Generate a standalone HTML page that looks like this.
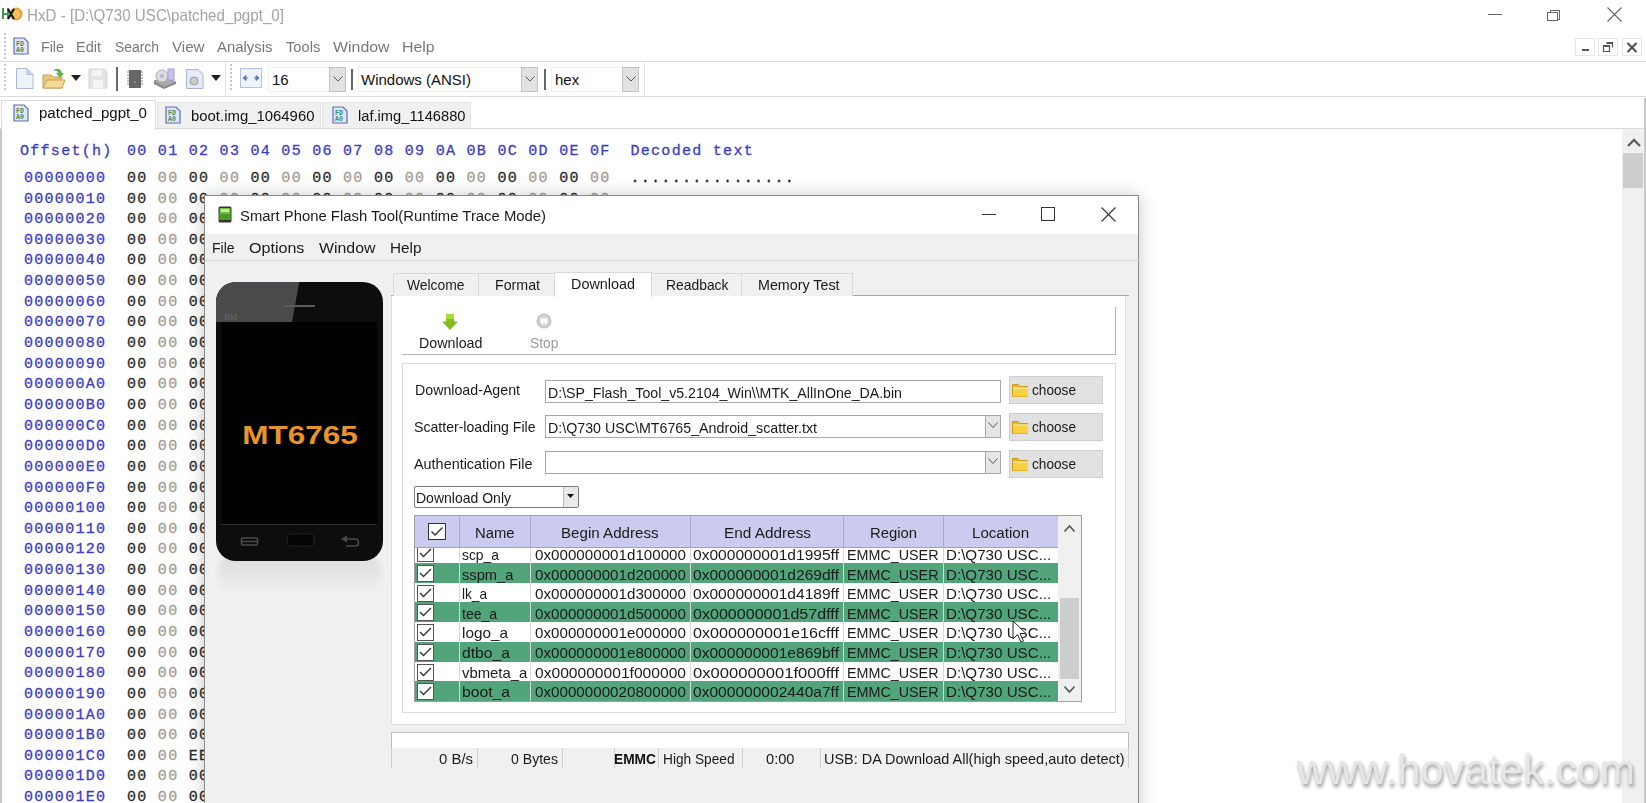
<!DOCTYPE html><html><head><meta charset="utf-8"><style>
html,body{margin:0;padding:0;width:1646px;height:803px;overflow:hidden;background:#fff}
.t{position:absolute;white-space:nowrap;line-height:normal;transform-origin:0 0}
</style></head><body>
<div style="position:absolute;left:0px;top:0px;width:1646px;height:803px;background:#fff"></div>
<svg style="position:absolute;left:1px;top:6px" width="22" height="16" viewBox="0 0 22 16">
<circle cx="15" cy="8" r="6.5" fill="#e0a030"/><circle cx="15" cy="8" r="4.5" fill="#f0c060"/>
<rect x="1" y="2" width="2" height="11" fill="#3a9a5a"/><rect x="6" y="2" width="2" height="11" fill="#3a9a5a"/><rect x="2" y="7" width="5" height="2" fill="#3a9a5a"/>
<path d="M7 3 L13 13 M13 3 L7 13" stroke="#111" stroke-width="2"/></svg>
<div class="t" id="t0" style="transform:scaleX(0.9187);left:27px;top:6.32px;font-size:16.5px;color:#a4a4a4;font-weight:400;font-family:'Liberation Sans',sans-serif;">HxD - [D:\Q730 USC\patched_pgpt_0]</div>
<div style="position:absolute;left:1488px;top:14px;width:14px;height:1px;background:#666"></div>
<div style="position:absolute;left:1550px;top:10px;width:10px;height:10px;border:1px solid #666;box-sizing:border-box"></div>
<div style="position:absolute;left:1547px;top:12px;width:11px;height:9px;border:1px solid #666;background:#fff;box-sizing:border-box"></div>
<svg style="position:absolute;left:1607px;top:7px" width="15" height="15"><path d="M0.5 0.5 L14.5 14.5 M14.5 0.5 L0.5 14.5" stroke="#666" stroke-width="1.1"/></svg>
<div style="position:absolute;left:4px;top:33px;width:2px;height:26px;background:repeating-linear-gradient(#c8c8c8 0 2px,transparent 2px 4px)"></div>
<svg style="position:absolute;left:13px;top:37px" width="16" height="18" viewBox="0 0 16 18">
<path d="M1 1 H11 L15 5 V17 H1 Z" fill="#dfe6f5" stroke="#5a6fb0" stroke-width="1.2"/>
<text x="3" y="8.5" font-family="Liberation Mono" font-size="6.5" font-weight="bold" fill="#3a8a6a">FD</text>
<text x="3" y="15" font-family="Liberation Mono" font-size="6.5" font-weight="bold" fill="#3a8a6a">A0</text></svg>
<div class="t" id="t1" style="transform:scaleX(0.9166);left:40.5px;top:37.74px;font-size:15.5px;color:#78787c;font-weight:400;font-family:'Liberation Sans',sans-serif;">File</div>
<div class="t" id="t2" style="transform:scaleX(0.9357);left:76px;top:37.74px;font-size:15.5px;color:#78787c;font-weight:400;font-family:'Liberation Sans',sans-serif;">Edit</div>
<div class="t" id="t3" style="transform:scaleX(0.8957);left:115px;top:37.74px;font-size:15.5px;color:#78787c;font-weight:400;font-family:'Liberation Sans',sans-serif;">Search</div>
<div class="t" id="t4" style="transform:scaleX(0.9752);left:172px;top:37.74px;font-size:15.5px;color:#78787c;font-weight:400;font-family:'Liberation Sans',sans-serif;">View</div>
<div class="t" id="t5" style="transform:scaleX(0.9616);left:217px;top:37.74px;font-size:15.5px;color:#78787c;font-weight:400;font-family:'Liberation Sans',sans-serif;">Analysis</div>
<div class="t" id="t6" style="transform:scaleX(0.9478);left:285.7px;top:37.74px;font-size:15.5px;color:#78787c;font-weight:400;font-family:'Liberation Sans',sans-serif;">Tools</div>
<div class="t" id="t7" style="transform:scaleX(1.0265);left:333px;top:37.74px;font-size:15.5px;color:#78787c;font-weight:400;font-family:'Liberation Sans',sans-serif;">Window</div>
<div class="t" id="t8" style="transform:scaleX(1.0254);left:402px;top:37.74px;font-size:15.5px;color:#78787c;font-weight:400;font-family:'Liberation Sans',sans-serif;">Help</div>
<div style="position:absolute;left:1575px;top:38px;width:20px;height:18px;border:1px solid #e6e6e6;box-sizing:border-box;background:#fff"></div>
<div style="position:absolute;left:1598px;top:38px;width:20px;height:18px;border:1px solid #e6e6e6;box-sizing:border-box;background:#fff"></div>
<div style="position:absolute;left:1622px;top:38px;width:20px;height:18px;border:1px solid #e6e6e6;box-sizing:border-box;background:#fff"></div>
<div style="position:absolute;left:1582px;top:49px;width:7px;height:2px;background:#555"></div>
<svg style="position:absolute;left:1602px;top:41px" width="12" height="12"><path d="M4.5 1.5 H10.5 V6.5 M1.5 4.5 H7.5 V10.5 H1.5 Z M1.5 5.5 H7.5 M4.5 2.5 H10.5" stroke="#555" fill="none" stroke-width="1.2"/></svg>
<svg style="position:absolute;left:1626px;top:42px" width="12" height="11"><path d="M1.5 1 L10.5 10 M10.5 1 L1.5 10" stroke="#555" stroke-width="2.2"/></svg>
<div style="position:absolute;left:0px;top:61px;width:1646px;height:1px;background:#dcdcdc"></div>
<div style="position:absolute;left:4px;top:64px;width:2px;height:28px;background:repeating-linear-gradient(#c8c8c8 0 2px,transparent 2px 4px)"></div>
<div style="position:absolute;left:230px;top:64px;width:2px;height:28px;background:repeating-linear-gradient(#c8c8c8 0 2px,transparent 2px 4px)"></div>
<div style="position:absolute;left:225px;top:62px;width:1px;height:35px;background:#e4e4e4"></div>
<div style="position:absolute;left:644px;top:62px;width:1px;height:35px;background:#e4e4e4"></div>
<svg style="position:absolute;left:15px;top:67px" width="20" height="24"><path d="M1.5 1.5 H12 L18 7.5 V21.5 H1.5 Z" fill="#eef2fb" stroke="#aab8da"/><path d="M12 1.5 V7.5 H18" fill="#c8d4ee" stroke="#aab8da"/></svg>
<svg style="position:absolute;left:42px;top:67px" width="24" height="24"><path d="M1 8 H9 L11 10 H20 V21 H1 Z" fill="#e8c478" stroke="#c9a050"/><path d="M1 21 L5 13 H23 L20 21 Z" fill="#f4d89a" stroke="#c9a050"/><path d="M10 5 C13 0 19 1 20 6 L22 6 L18 11 L14 6 L16 6 C15 3 12 3 10 5Z" fill="#55b848"/></svg>
<svg style="position:absolute;left:71px;top:75px" width="10" height="6"><path d="M0 0 H10 L5 6 Z" fill="#222"/></svg>
<svg style="position:absolute;left:88px;top:68px" width="20" height="21"><path d="M1 1 H16 L19 4 V20 H1 Z" fill="#e4e4e4" stroke="#d4d4d4"/><rect x="4" y="2" width="10" height="6" fill="#f4f4f4"/><rect x="5" y="12" width="10" height="8" fill="#f6f6f6"/></svg>
<div style="position:absolute;left:116px;top:67px;width:1.5px;height:24px;background:#6a6a6a"></div>
<svg style="position:absolute;left:126px;top:69px" width="18" height="20"><rect x="3" y="1" width="12" height="18" fill="#666"/><circle cx="9" cy="13" r="1" fill="#999"/><path d="M1 3 H3 M1 6 H3 M1 9 H3 M1 12 H3 M1 15 H3 M15 3 H17 M15 6 H17 M15 9 H17 M15 12 H17 M15 15 H17" stroke="#888"/></svg>
<svg style="position:absolute;left:153px;top:68px" width="24" height="22"><path d="M1 13 L11 19 L23 14 L13 9 Z" fill="#aaa" stroke="#999"/><path d="M1 13 V16 L11 21 L23 16 V14 L11 19 Z" fill="#888"/><circle cx="9" cy="8" r="6" fill="#ddd" stroke="#aaa"/><circle cx="9" cy="8" r="2" fill="#b8b0e0"/><rect x="15" y="1" width="6" height="11" fill="#c8c0ee" stroke="#a8a0d8"/></svg>
<svg style="position:absolute;left:185px;top:68px" width="20" height="22"><path d="M1.5 1.5 H13 L18 6 V20.5 H1.5 Z" fill="#e6eaf8" stroke="#a8b4dc"/><circle cx="9" cy="13" r="4" fill="#ccc" stroke="#999"/></svg>
<svg style="position:absolute;left:211px;top:75px" width="10" height="6"><path d="M0 0 H10 L5 6 Z" fill="#222"/></svg>
<svg style="position:absolute;left:240px;top:68px" width="22" height="20"><rect x="0.5" y="0.5" width="21" height="19" fill="#eef2fb" stroke="#b4c2e4"/><path d="M3 10 H8 M14 10 H19 M3 10 L6 7.5 V12.5 Z M19 10 L16 7.5 V12.5 Z" stroke="#5a7ac0" fill="#5a7ac0"/></svg>
<div style="position:absolute;left:268px;top:67px;width:78px;height:25px;background:#fff;border:1px solid #f0f0f0;box-sizing:border-box"></div>
<div style="position:absolute;left:329px;top:67px;width:17px;height:25px;background:#e1e1e1;border:1px solid #c4c4c4;box-sizing:border-box"></div>
<svg style="position:absolute;left:333px;top:76px" width="10" height="6"><path d="M0.5 0.5 L5 5 L9.5 0.5" stroke="#555" fill="none"/></svg>
<div class="t" id="t9" style="left:272px;top:71.20px;font-size:15px;color:#111;font-weight:400;font-family:'Liberation Sans',sans-serif;">16</div>
<div style="position:absolute;left:351px;top:69px;width:2px;height:21px;background:#666"></div>
<div style="position:absolute;left:358px;top:67px;width:180px;height:25px;background:#fff;border:1px solid #f0f0f0;box-sizing:border-box"></div>
<div style="position:absolute;left:521px;top:67px;width:17px;height:25px;background:#e1e1e1;border:1px solid #c4c4c4;box-sizing:border-box"></div>
<svg style="position:absolute;left:525px;top:76px" width="10" height="6"><path d="M0.5 0.5 L5 5 L9.5 0.5" stroke="#555" fill="none"/></svg>
<div class="t" id="t10" style="left:361px;top:71.20px;font-size:15px;color:#111;font-weight:400;font-family:'Liberation Sans',sans-serif;">Windows (ANSI)</div>
<div style="position:absolute;left:544px;top:69px;width:2px;height:21px;background:#666"></div>
<div style="position:absolute;left:551px;top:67px;width:88px;height:25px;background:#fff;border:1px solid #f0f0f0;box-sizing:border-box"></div>
<div style="position:absolute;left:622px;top:67px;width:17px;height:25px;background:#e1e1e1;border:1px solid #c4c4c4;box-sizing:border-box"></div>
<svg style="position:absolute;left:626px;top:76px" width="10" height="6"><path d="M0.5 0.5 L5 5 L9.5 0.5" stroke="#555" fill="none"/></svg>
<div class="t" id="t11" style="left:555px;top:71.20px;font-size:15px;color:#111;font-weight:400;font-family:'Liberation Sans',sans-serif;">hex</div>
<div style="position:absolute;left:0px;top:96px;width:1646px;height:1px;background:#dcdcdc"></div>
<div style="position:absolute;left:157px;top:102px;width:164px;height:26px;background:#f0f0f0;border:1px solid #e4e4e4;border-bottom:none;box-sizing:border-box"></div>
<div style="position:absolute;left:322px;top:102px;width:149px;height:26px;background:#f0f0f0;border:1px solid #e4e4e4;border-bottom:none;box-sizing:border-box"></div>
<div style="position:absolute;left:0px;top:128px;width:1646px;height:1px;background:#dadada"></div>
<div style="position:absolute;left:1px;top:100px;width:155px;height:30px;background:#fff;border:1px solid #dadada;border-bottom:none;box-sizing:border-box"></div>
<svg style="position:absolute;left:13px;top:104px" width="16" height="18" viewBox="0 0 16 18">
<path d="M1 1 H11 L15 5 V17 H1 Z" fill="#dfe6f5" stroke="#5a6fb0" stroke-width="1.2"/>
<text x="3" y="8.5" font-family="Liberation Mono" font-size="6.5" font-weight="bold" fill="#3a8a6a">FD</text>
<text x="3" y="15" font-family="Liberation Mono" font-size="6.5" font-weight="bold" fill="#3a8a6a">A0</text></svg>
<svg style="position:absolute;left:165px;top:106px" width="16" height="18" viewBox="0 0 16 18">
<path d="M1 1 H11 L15 5 V17 H1 Z" fill="#dfe6f5" stroke="#5a6fb0" stroke-width="1.2"/>
<text x="3" y="8.5" font-family="Liberation Mono" font-size="6.5" font-weight="bold" fill="#3a8a6a">FD</text>
<text x="3" y="15" font-family="Liberation Mono" font-size="6.5" font-weight="bold" fill="#3a8a6a">A0</text></svg>
<svg style="position:absolute;left:332px;top:106px" width="16" height="18" viewBox="0 0 16 18">
<path d="M1 1 H11 L15 5 V17 H1 Z" fill="#dfe6f5" stroke="#5a6fb0" stroke-width="1.2"/>
<text x="3" y="8.5" font-family="Liberation Mono" font-size="6.5" font-weight="bold" fill="#3a8a6a">FD</text>
<text x="3" y="15" font-family="Liberation Mono" font-size="6.5" font-weight="bold" fill="#3a8a6a">A0</text></svg>
<div class="t" id="t12" style="transform:scaleX(0.9713);left:38.5px;top:104.24px;font-size:15.5px;color:#111;font-weight:400;font-family:'Liberation Sans',sans-serif;">patched_pgpt_0</div>
<div class="t" id="t13" style="transform:scaleX(0.9617);left:190.5px;top:106.74px;font-size:15.5px;color:#111;font-weight:400;font-family:'Liberation Sans',sans-serif;">boot.img_1064960</div>
<div class="t" id="t14" style="transform:scaleX(0.9474);left:357.5px;top:106.74px;font-size:15.5px;color:#111;font-weight:400;font-family:'Liberation Sans',sans-serif;">laf.img_1146880</div>
<div style="position:absolute;left:0px;top:129px;width:2px;height:674px;background:#c8c8c8"></div>
<div style="position:absolute;left:1622px;top:129px;width:24px;height:674px;background:#f0f0f0"></div>
<div style="position:absolute;left:1644px;top:98px;width:2px;height:705px;background:#c8c8c8"></div>
<svg style="position:absolute;left:1626px;top:138px" width="16" height="10"><path d="M2 8 L8 2 L14 8" stroke="#606060" stroke-width="2.4" fill="none"/></svg>
<div style="position:absolute;left:1623px;top:153px;width:20px;height:35px;background:#cdcdcd"></div>
<div class="t" id="t15" style="left:20px;top:142.90px;font-size:15px;color:#3c3cc8;font-weight:400;font-family:'Liberation Mono',sans-serif;letter-spacing:1.29px;-webkit-text-stroke:0.3px currentColor">Offset(h)</div>
<div class="t" id="t16" style="left:127.0px;top:142.90px;font-size:15px;color:#3c3cc8;font-weight:400;font-family:'Liberation Mono',sans-serif;letter-spacing:1.29px;-webkit-text-stroke:0.3px currentColor">00</div>
<div class="t" id="t17" style="left:157.87px;top:142.90px;font-size:15px;color:#3c3cc8;font-weight:400;font-family:'Liberation Mono',sans-serif;letter-spacing:1.29px;-webkit-text-stroke:0.3px currentColor">01</div>
<div class="t" id="t18" style="left:188.74px;top:142.90px;font-size:15px;color:#3c3cc8;font-weight:400;font-family:'Liberation Mono',sans-serif;letter-spacing:1.29px;-webkit-text-stroke:0.3px currentColor">02</div>
<div class="t" id="t19" style="left:219.61px;top:142.90px;font-size:15px;color:#3c3cc8;font-weight:400;font-family:'Liberation Mono',sans-serif;letter-spacing:1.29px;-webkit-text-stroke:0.3px currentColor">03</div>
<div class="t" id="t20" style="left:250.48000000000002px;top:142.90px;font-size:15px;color:#3c3cc8;font-weight:400;font-family:'Liberation Mono',sans-serif;letter-spacing:1.29px;-webkit-text-stroke:0.3px currentColor">04</div>
<div class="t" id="t21" style="left:281.35px;top:142.90px;font-size:15px;color:#3c3cc8;font-weight:400;font-family:'Liberation Mono',sans-serif;letter-spacing:1.29px;-webkit-text-stroke:0.3px currentColor">05</div>
<div class="t" id="t22" style="left:312.22px;top:142.90px;font-size:15px;color:#3c3cc8;font-weight:400;font-family:'Liberation Mono',sans-serif;letter-spacing:1.29px;-webkit-text-stroke:0.3px currentColor">06</div>
<div class="t" id="t23" style="left:343.09000000000003px;top:142.90px;font-size:15px;color:#3c3cc8;font-weight:400;font-family:'Liberation Mono',sans-serif;letter-spacing:1.29px;-webkit-text-stroke:0.3px currentColor">07</div>
<div class="t" id="t24" style="left:373.96000000000004px;top:142.90px;font-size:15px;color:#3c3cc8;font-weight:400;font-family:'Liberation Mono',sans-serif;letter-spacing:1.29px;-webkit-text-stroke:0.3px currentColor">08</div>
<div class="t" id="t25" style="left:404.83px;top:142.90px;font-size:15px;color:#3c3cc8;font-weight:400;font-family:'Liberation Mono',sans-serif;letter-spacing:1.29px;-webkit-text-stroke:0.3px currentColor">09</div>
<div class="t" id="t26" style="left:435.7px;top:142.90px;font-size:15px;color:#3c3cc8;font-weight:400;font-family:'Liberation Mono',sans-serif;letter-spacing:1.29px;-webkit-text-stroke:0.3px currentColor">0A</div>
<div class="t" id="t27" style="left:466.57px;top:142.90px;font-size:15px;color:#3c3cc8;font-weight:400;font-family:'Liberation Mono',sans-serif;letter-spacing:1.29px;-webkit-text-stroke:0.3px currentColor">0B</div>
<div class="t" id="t28" style="left:497.44px;top:142.90px;font-size:15px;color:#3c3cc8;font-weight:400;font-family:'Liberation Mono',sans-serif;letter-spacing:1.29px;-webkit-text-stroke:0.3px currentColor">0C</div>
<div class="t" id="t29" style="left:528.31px;top:142.90px;font-size:15px;color:#3c3cc8;font-weight:400;font-family:'Liberation Mono',sans-serif;letter-spacing:1.29px;-webkit-text-stroke:0.3px currentColor">0D</div>
<div class="t" id="t30" style="left:559.1800000000001px;top:142.90px;font-size:15px;color:#3c3cc8;font-weight:400;font-family:'Liberation Mono',sans-serif;letter-spacing:1.29px;-webkit-text-stroke:0.3px currentColor">0E</div>
<div class="t" id="t31" style="left:590.05px;top:142.90px;font-size:15px;color:#3c3cc8;font-weight:400;font-family:'Liberation Mono',sans-serif;letter-spacing:1.29px;-webkit-text-stroke:0.3px currentColor">0F</div>
<div class="t" id="t32" style="left:630.5px;top:142.90px;font-size:15px;color:#3c3cc8;font-weight:400;font-family:'Liberation Mono',sans-serif;letter-spacing:1.29px;-webkit-text-stroke:0.3px currentColor">Decoded text</div>
<div class="t" id="t33" style="left:24px;top:169.90px;font-size:15px;color:#3c3cc8;font-weight:400;font-family:'Liberation Mono',sans-serif;letter-spacing:1.29px;-webkit-text-stroke:0.3px currentColor">00000000</div>
<div class="t" id="t34" style="left:127.0px;top:169.90px;font-size:15px;color:#2c2c2c;font-weight:400;font-family:'Liberation Mono',sans-serif;letter-spacing:1.29px;-webkit-text-stroke:0.3px currentColor">00</div>
<div class="t" id="t35" style="left:157.87px;top:169.90px;font-size:15px;color:#a29c94;font-weight:400;font-family:'Liberation Mono',sans-serif;letter-spacing:1.29px;-webkit-text-stroke:0.3px currentColor">00</div>
<div class="t" id="t36" style="left:188.74px;top:169.90px;font-size:15px;color:#2c2c2c;font-weight:400;font-family:'Liberation Mono',sans-serif;letter-spacing:1.29px;-webkit-text-stroke:0.3px currentColor">00</div>
<div class="t" id="t37" style="left:219.61px;top:169.90px;font-size:15px;color:#a29c94;font-weight:400;font-family:'Liberation Mono',sans-serif;letter-spacing:1.29px;-webkit-text-stroke:0.3px currentColor">00</div>
<div class="t" id="t38" style="left:250.48000000000002px;top:169.90px;font-size:15px;color:#2c2c2c;font-weight:400;font-family:'Liberation Mono',sans-serif;letter-spacing:1.29px;-webkit-text-stroke:0.3px currentColor">00</div>
<div class="t" id="t39" style="left:281.35px;top:169.90px;font-size:15px;color:#a29c94;font-weight:400;font-family:'Liberation Mono',sans-serif;letter-spacing:1.29px;-webkit-text-stroke:0.3px currentColor">00</div>
<div class="t" id="t40" style="left:312.22px;top:169.90px;font-size:15px;color:#2c2c2c;font-weight:400;font-family:'Liberation Mono',sans-serif;letter-spacing:1.29px;-webkit-text-stroke:0.3px currentColor">00</div>
<div class="t" id="t41" style="left:343.09000000000003px;top:169.90px;font-size:15px;color:#a29c94;font-weight:400;font-family:'Liberation Mono',sans-serif;letter-spacing:1.29px;-webkit-text-stroke:0.3px currentColor">00</div>
<div class="t" id="t42" style="left:373.96000000000004px;top:169.90px;font-size:15px;color:#2c2c2c;font-weight:400;font-family:'Liberation Mono',sans-serif;letter-spacing:1.29px;-webkit-text-stroke:0.3px currentColor">00</div>
<div class="t" id="t43" style="left:404.83px;top:169.90px;font-size:15px;color:#a29c94;font-weight:400;font-family:'Liberation Mono',sans-serif;letter-spacing:1.29px;-webkit-text-stroke:0.3px currentColor">00</div>
<div class="t" id="t44" style="left:435.7px;top:169.90px;font-size:15px;color:#2c2c2c;font-weight:400;font-family:'Liberation Mono',sans-serif;letter-spacing:1.29px;-webkit-text-stroke:0.3px currentColor">00</div>
<div class="t" id="t45" style="left:466.57px;top:169.90px;font-size:15px;color:#a29c94;font-weight:400;font-family:'Liberation Mono',sans-serif;letter-spacing:1.29px;-webkit-text-stroke:0.3px currentColor">00</div>
<div class="t" id="t46" style="left:497.44px;top:169.90px;font-size:15px;color:#2c2c2c;font-weight:400;font-family:'Liberation Mono',sans-serif;letter-spacing:1.29px;-webkit-text-stroke:0.3px currentColor">00</div>
<div class="t" id="t47" style="left:528.31px;top:169.90px;font-size:15px;color:#a29c94;font-weight:400;font-family:'Liberation Mono',sans-serif;letter-spacing:1.29px;-webkit-text-stroke:0.3px currentColor">00</div>
<div class="t" id="t48" style="left:559.1800000000001px;top:169.90px;font-size:15px;color:#2c2c2c;font-weight:400;font-family:'Liberation Mono',sans-serif;letter-spacing:1.29px;-webkit-text-stroke:0.3px currentColor">00</div>
<div class="t" id="t49" style="left:590.05px;top:169.90px;font-size:15px;color:#a29c94;font-weight:400;font-family:'Liberation Mono',sans-serif;letter-spacing:1.29px;-webkit-text-stroke:0.3px currentColor">00</div>
<div class="t" id="t50" style="left:630.5px;top:169.90px;font-size:15px;color:#222;font-weight:400;font-family:'Liberation Mono',sans-serif;letter-spacing:1.29px;-webkit-text-stroke:0.3px currentColor">................</div>
<div class="t" id="t51" style="left:24px;top:190.54px;font-size:15px;color:#3c3cc8;font-weight:400;font-family:'Liberation Mono',sans-serif;letter-spacing:1.29px;-webkit-text-stroke:0.3px currentColor">00000010</div>
<div class="t" id="t52" style="left:127.0px;top:190.54px;font-size:15px;color:#2c2c2c;font-weight:400;font-family:'Liberation Mono',sans-serif;letter-spacing:1.29px;-webkit-text-stroke:0.3px currentColor">00</div>
<div class="t" id="t53" style="left:157.87px;top:190.54px;font-size:15px;color:#a29c94;font-weight:400;font-family:'Liberation Mono',sans-serif;letter-spacing:1.29px;-webkit-text-stroke:0.3px currentColor">00</div>
<div class="t" id="t54" style="left:188.74px;top:190.54px;font-size:15px;color:#2c2c2c;font-weight:400;font-family:'Liberation Mono',sans-serif;letter-spacing:1.29px;-webkit-text-stroke:0.3px currentColor">00</div>
<div class="t" id="t55" style="left:219.61px;top:190.54px;font-size:15px;color:#a29c94;font-weight:400;font-family:'Liberation Mono',sans-serif;letter-spacing:1.29px;-webkit-text-stroke:0.3px currentColor">00</div>
<div class="t" id="t56" style="left:250.48000000000002px;top:190.54px;font-size:15px;color:#2c2c2c;font-weight:400;font-family:'Liberation Mono',sans-serif;letter-spacing:1.29px;-webkit-text-stroke:0.3px currentColor">00</div>
<div class="t" id="t57" style="left:281.35px;top:190.54px;font-size:15px;color:#a29c94;font-weight:400;font-family:'Liberation Mono',sans-serif;letter-spacing:1.29px;-webkit-text-stroke:0.3px currentColor">00</div>
<div class="t" id="t58" style="left:312.22px;top:190.54px;font-size:15px;color:#2c2c2c;font-weight:400;font-family:'Liberation Mono',sans-serif;letter-spacing:1.29px;-webkit-text-stroke:0.3px currentColor">00</div>
<div class="t" id="t59" style="left:343.09000000000003px;top:190.54px;font-size:15px;color:#a29c94;font-weight:400;font-family:'Liberation Mono',sans-serif;letter-spacing:1.29px;-webkit-text-stroke:0.3px currentColor">00</div>
<div class="t" id="t60" style="left:373.96000000000004px;top:190.54px;font-size:15px;color:#2c2c2c;font-weight:400;font-family:'Liberation Mono',sans-serif;letter-spacing:1.29px;-webkit-text-stroke:0.3px currentColor">00</div>
<div class="t" id="t61" style="left:404.83px;top:190.54px;font-size:15px;color:#a29c94;font-weight:400;font-family:'Liberation Mono',sans-serif;letter-spacing:1.29px;-webkit-text-stroke:0.3px currentColor">00</div>
<div class="t" id="t62" style="left:435.7px;top:190.54px;font-size:15px;color:#2c2c2c;font-weight:400;font-family:'Liberation Mono',sans-serif;letter-spacing:1.29px;-webkit-text-stroke:0.3px currentColor">00</div>
<div class="t" id="t63" style="left:466.57px;top:190.54px;font-size:15px;color:#a29c94;font-weight:400;font-family:'Liberation Mono',sans-serif;letter-spacing:1.29px;-webkit-text-stroke:0.3px currentColor">00</div>
<div class="t" id="t64" style="left:497.44px;top:190.54px;font-size:15px;color:#2c2c2c;font-weight:400;font-family:'Liberation Mono',sans-serif;letter-spacing:1.29px;-webkit-text-stroke:0.3px currentColor">00</div>
<div class="t" id="t65" style="left:528.31px;top:190.54px;font-size:15px;color:#a29c94;font-weight:400;font-family:'Liberation Mono',sans-serif;letter-spacing:1.29px;-webkit-text-stroke:0.3px currentColor">00</div>
<div class="t" id="t66" style="left:559.1800000000001px;top:190.54px;font-size:15px;color:#2c2c2c;font-weight:400;font-family:'Liberation Mono',sans-serif;letter-spacing:1.29px;-webkit-text-stroke:0.3px currentColor">00</div>
<div class="t" id="t67" style="left:590.05px;top:190.54px;font-size:15px;color:#a29c94;font-weight:400;font-family:'Liberation Mono',sans-serif;letter-spacing:1.29px;-webkit-text-stroke:0.3px currentColor">00</div>
<div class="t" id="t68" style="left:630.5px;top:190.54px;font-size:15px;color:#222;font-weight:400;font-family:'Liberation Mono',sans-serif;letter-spacing:1.29px;-webkit-text-stroke:0.3px currentColor">................</div>
<div class="t" id="t69" style="left:24px;top:211.18px;font-size:15px;color:#3c3cc8;font-weight:400;font-family:'Liberation Mono',sans-serif;letter-spacing:1.29px;-webkit-text-stroke:0.3px currentColor">00000020</div>
<div class="t" id="t70" style="left:127.0px;top:211.18px;font-size:15px;color:#2c2c2c;font-weight:400;font-family:'Liberation Mono',sans-serif;letter-spacing:1.29px;-webkit-text-stroke:0.3px currentColor">00</div>
<div class="t" id="t71" style="left:157.87px;top:211.18px;font-size:15px;color:#a29c94;font-weight:400;font-family:'Liberation Mono',sans-serif;letter-spacing:1.29px;-webkit-text-stroke:0.3px currentColor">00</div>
<div class="t" id="t72" style="left:188.74px;top:211.18px;font-size:15px;color:#2c2c2c;font-weight:400;font-family:'Liberation Mono',sans-serif;letter-spacing:1.29px;-webkit-text-stroke:0.3px currentColor">00</div>
<div class="t" id="t73" style="left:219.61px;top:211.18px;font-size:15px;color:#a29c94;font-weight:400;font-family:'Liberation Mono',sans-serif;letter-spacing:1.29px;-webkit-text-stroke:0.3px currentColor">00</div>
<div class="t" id="t74" style="left:250.48000000000002px;top:211.18px;font-size:15px;color:#2c2c2c;font-weight:400;font-family:'Liberation Mono',sans-serif;letter-spacing:1.29px;-webkit-text-stroke:0.3px currentColor">00</div>
<div class="t" id="t75" style="left:281.35px;top:211.18px;font-size:15px;color:#a29c94;font-weight:400;font-family:'Liberation Mono',sans-serif;letter-spacing:1.29px;-webkit-text-stroke:0.3px currentColor">00</div>
<div class="t" id="t76" style="left:312.22px;top:211.18px;font-size:15px;color:#2c2c2c;font-weight:400;font-family:'Liberation Mono',sans-serif;letter-spacing:1.29px;-webkit-text-stroke:0.3px currentColor">00</div>
<div class="t" id="t77" style="left:343.09000000000003px;top:211.18px;font-size:15px;color:#a29c94;font-weight:400;font-family:'Liberation Mono',sans-serif;letter-spacing:1.29px;-webkit-text-stroke:0.3px currentColor">00</div>
<div class="t" id="t78" style="left:373.96000000000004px;top:211.18px;font-size:15px;color:#2c2c2c;font-weight:400;font-family:'Liberation Mono',sans-serif;letter-spacing:1.29px;-webkit-text-stroke:0.3px currentColor">00</div>
<div class="t" id="t79" style="left:404.83px;top:211.18px;font-size:15px;color:#a29c94;font-weight:400;font-family:'Liberation Mono',sans-serif;letter-spacing:1.29px;-webkit-text-stroke:0.3px currentColor">00</div>
<div class="t" id="t80" style="left:435.7px;top:211.18px;font-size:15px;color:#2c2c2c;font-weight:400;font-family:'Liberation Mono',sans-serif;letter-spacing:1.29px;-webkit-text-stroke:0.3px currentColor">00</div>
<div class="t" id="t81" style="left:466.57px;top:211.18px;font-size:15px;color:#a29c94;font-weight:400;font-family:'Liberation Mono',sans-serif;letter-spacing:1.29px;-webkit-text-stroke:0.3px currentColor">00</div>
<div class="t" id="t82" style="left:497.44px;top:211.18px;font-size:15px;color:#2c2c2c;font-weight:400;font-family:'Liberation Mono',sans-serif;letter-spacing:1.29px;-webkit-text-stroke:0.3px currentColor">00</div>
<div class="t" id="t83" style="left:528.31px;top:211.18px;font-size:15px;color:#a29c94;font-weight:400;font-family:'Liberation Mono',sans-serif;letter-spacing:1.29px;-webkit-text-stroke:0.3px currentColor">00</div>
<div class="t" id="t84" style="left:559.1800000000001px;top:211.18px;font-size:15px;color:#2c2c2c;font-weight:400;font-family:'Liberation Mono',sans-serif;letter-spacing:1.29px;-webkit-text-stroke:0.3px currentColor">00</div>
<div class="t" id="t85" style="left:590.05px;top:211.18px;font-size:15px;color:#a29c94;font-weight:400;font-family:'Liberation Mono',sans-serif;letter-spacing:1.29px;-webkit-text-stroke:0.3px currentColor">00</div>
<div class="t" id="t86" style="left:630.5px;top:211.18px;font-size:15px;color:#222;font-weight:400;font-family:'Liberation Mono',sans-serif;letter-spacing:1.29px;-webkit-text-stroke:0.3px currentColor">................</div>
<div class="t" id="t87" style="left:24px;top:231.82px;font-size:15px;color:#3c3cc8;font-weight:400;font-family:'Liberation Mono',sans-serif;letter-spacing:1.29px;-webkit-text-stroke:0.3px currentColor">00000030</div>
<div class="t" id="t88" style="left:127.0px;top:231.82px;font-size:15px;color:#2c2c2c;font-weight:400;font-family:'Liberation Mono',sans-serif;letter-spacing:1.29px;-webkit-text-stroke:0.3px currentColor">00</div>
<div class="t" id="t89" style="left:157.87px;top:231.82px;font-size:15px;color:#a29c94;font-weight:400;font-family:'Liberation Mono',sans-serif;letter-spacing:1.29px;-webkit-text-stroke:0.3px currentColor">00</div>
<div class="t" id="t90" style="left:188.74px;top:231.82px;font-size:15px;color:#2c2c2c;font-weight:400;font-family:'Liberation Mono',sans-serif;letter-spacing:1.29px;-webkit-text-stroke:0.3px currentColor">00</div>
<div class="t" id="t91" style="left:219.61px;top:231.82px;font-size:15px;color:#a29c94;font-weight:400;font-family:'Liberation Mono',sans-serif;letter-spacing:1.29px;-webkit-text-stroke:0.3px currentColor">00</div>
<div class="t" id="t92" style="left:250.48000000000002px;top:231.82px;font-size:15px;color:#2c2c2c;font-weight:400;font-family:'Liberation Mono',sans-serif;letter-spacing:1.29px;-webkit-text-stroke:0.3px currentColor">00</div>
<div class="t" id="t93" style="left:281.35px;top:231.82px;font-size:15px;color:#a29c94;font-weight:400;font-family:'Liberation Mono',sans-serif;letter-spacing:1.29px;-webkit-text-stroke:0.3px currentColor">00</div>
<div class="t" id="t94" style="left:312.22px;top:231.82px;font-size:15px;color:#2c2c2c;font-weight:400;font-family:'Liberation Mono',sans-serif;letter-spacing:1.29px;-webkit-text-stroke:0.3px currentColor">00</div>
<div class="t" id="t95" style="left:343.09000000000003px;top:231.82px;font-size:15px;color:#a29c94;font-weight:400;font-family:'Liberation Mono',sans-serif;letter-spacing:1.29px;-webkit-text-stroke:0.3px currentColor">00</div>
<div class="t" id="t96" style="left:373.96000000000004px;top:231.82px;font-size:15px;color:#2c2c2c;font-weight:400;font-family:'Liberation Mono',sans-serif;letter-spacing:1.29px;-webkit-text-stroke:0.3px currentColor">00</div>
<div class="t" id="t97" style="left:404.83px;top:231.82px;font-size:15px;color:#a29c94;font-weight:400;font-family:'Liberation Mono',sans-serif;letter-spacing:1.29px;-webkit-text-stroke:0.3px currentColor">00</div>
<div class="t" id="t98" style="left:435.7px;top:231.82px;font-size:15px;color:#2c2c2c;font-weight:400;font-family:'Liberation Mono',sans-serif;letter-spacing:1.29px;-webkit-text-stroke:0.3px currentColor">00</div>
<div class="t" id="t99" style="left:466.57px;top:231.82px;font-size:15px;color:#a29c94;font-weight:400;font-family:'Liberation Mono',sans-serif;letter-spacing:1.29px;-webkit-text-stroke:0.3px currentColor">00</div>
<div class="t" id="t100" style="left:497.44px;top:231.82px;font-size:15px;color:#2c2c2c;font-weight:400;font-family:'Liberation Mono',sans-serif;letter-spacing:1.29px;-webkit-text-stroke:0.3px currentColor">00</div>
<div class="t" id="t101" style="left:528.31px;top:231.82px;font-size:15px;color:#a29c94;font-weight:400;font-family:'Liberation Mono',sans-serif;letter-spacing:1.29px;-webkit-text-stroke:0.3px currentColor">00</div>
<div class="t" id="t102" style="left:559.1800000000001px;top:231.82px;font-size:15px;color:#2c2c2c;font-weight:400;font-family:'Liberation Mono',sans-serif;letter-spacing:1.29px;-webkit-text-stroke:0.3px currentColor">00</div>
<div class="t" id="t103" style="left:590.05px;top:231.82px;font-size:15px;color:#a29c94;font-weight:400;font-family:'Liberation Mono',sans-serif;letter-spacing:1.29px;-webkit-text-stroke:0.3px currentColor">00</div>
<div class="t" id="t104" style="left:630.5px;top:231.82px;font-size:15px;color:#222;font-weight:400;font-family:'Liberation Mono',sans-serif;letter-spacing:1.29px;-webkit-text-stroke:0.3px currentColor">................</div>
<div class="t" id="t105" style="left:24px;top:252.46px;font-size:15px;color:#3c3cc8;font-weight:400;font-family:'Liberation Mono',sans-serif;letter-spacing:1.29px;-webkit-text-stroke:0.3px currentColor">00000040</div>
<div class="t" id="t106" style="left:127.0px;top:252.46px;font-size:15px;color:#2c2c2c;font-weight:400;font-family:'Liberation Mono',sans-serif;letter-spacing:1.29px;-webkit-text-stroke:0.3px currentColor">00</div>
<div class="t" id="t107" style="left:157.87px;top:252.46px;font-size:15px;color:#a29c94;font-weight:400;font-family:'Liberation Mono',sans-serif;letter-spacing:1.29px;-webkit-text-stroke:0.3px currentColor">00</div>
<div class="t" id="t108" style="left:188.74px;top:252.46px;font-size:15px;color:#2c2c2c;font-weight:400;font-family:'Liberation Mono',sans-serif;letter-spacing:1.29px;-webkit-text-stroke:0.3px currentColor">00</div>
<div class="t" id="t109" style="left:219.61px;top:252.46px;font-size:15px;color:#a29c94;font-weight:400;font-family:'Liberation Mono',sans-serif;letter-spacing:1.29px;-webkit-text-stroke:0.3px currentColor">00</div>
<div class="t" id="t110" style="left:250.48000000000002px;top:252.46px;font-size:15px;color:#2c2c2c;font-weight:400;font-family:'Liberation Mono',sans-serif;letter-spacing:1.29px;-webkit-text-stroke:0.3px currentColor">00</div>
<div class="t" id="t111" style="left:281.35px;top:252.46px;font-size:15px;color:#a29c94;font-weight:400;font-family:'Liberation Mono',sans-serif;letter-spacing:1.29px;-webkit-text-stroke:0.3px currentColor">00</div>
<div class="t" id="t112" style="left:312.22px;top:252.46px;font-size:15px;color:#2c2c2c;font-weight:400;font-family:'Liberation Mono',sans-serif;letter-spacing:1.29px;-webkit-text-stroke:0.3px currentColor">00</div>
<div class="t" id="t113" style="left:343.09000000000003px;top:252.46px;font-size:15px;color:#a29c94;font-weight:400;font-family:'Liberation Mono',sans-serif;letter-spacing:1.29px;-webkit-text-stroke:0.3px currentColor">00</div>
<div class="t" id="t114" style="left:373.96000000000004px;top:252.46px;font-size:15px;color:#2c2c2c;font-weight:400;font-family:'Liberation Mono',sans-serif;letter-spacing:1.29px;-webkit-text-stroke:0.3px currentColor">00</div>
<div class="t" id="t115" style="left:404.83px;top:252.46px;font-size:15px;color:#a29c94;font-weight:400;font-family:'Liberation Mono',sans-serif;letter-spacing:1.29px;-webkit-text-stroke:0.3px currentColor">00</div>
<div class="t" id="t116" style="left:435.7px;top:252.46px;font-size:15px;color:#2c2c2c;font-weight:400;font-family:'Liberation Mono',sans-serif;letter-spacing:1.29px;-webkit-text-stroke:0.3px currentColor">00</div>
<div class="t" id="t117" style="left:466.57px;top:252.46px;font-size:15px;color:#a29c94;font-weight:400;font-family:'Liberation Mono',sans-serif;letter-spacing:1.29px;-webkit-text-stroke:0.3px currentColor">00</div>
<div class="t" id="t118" style="left:497.44px;top:252.46px;font-size:15px;color:#2c2c2c;font-weight:400;font-family:'Liberation Mono',sans-serif;letter-spacing:1.29px;-webkit-text-stroke:0.3px currentColor">00</div>
<div class="t" id="t119" style="left:528.31px;top:252.46px;font-size:15px;color:#a29c94;font-weight:400;font-family:'Liberation Mono',sans-serif;letter-spacing:1.29px;-webkit-text-stroke:0.3px currentColor">00</div>
<div class="t" id="t120" style="left:559.1800000000001px;top:252.46px;font-size:15px;color:#2c2c2c;font-weight:400;font-family:'Liberation Mono',sans-serif;letter-spacing:1.29px;-webkit-text-stroke:0.3px currentColor">00</div>
<div class="t" id="t121" style="left:590.05px;top:252.46px;font-size:15px;color:#a29c94;font-weight:400;font-family:'Liberation Mono',sans-serif;letter-spacing:1.29px;-webkit-text-stroke:0.3px currentColor">00</div>
<div class="t" id="t122" style="left:630.5px;top:252.46px;font-size:15px;color:#222;font-weight:400;font-family:'Liberation Mono',sans-serif;letter-spacing:1.29px;-webkit-text-stroke:0.3px currentColor">................</div>
<div class="t" id="t123" style="left:24px;top:273.10px;font-size:15px;color:#3c3cc8;font-weight:400;font-family:'Liberation Mono',sans-serif;letter-spacing:1.29px;-webkit-text-stroke:0.3px currentColor">00000050</div>
<div class="t" id="t124" style="left:127.0px;top:273.10px;font-size:15px;color:#2c2c2c;font-weight:400;font-family:'Liberation Mono',sans-serif;letter-spacing:1.29px;-webkit-text-stroke:0.3px currentColor">00</div>
<div class="t" id="t125" style="left:157.87px;top:273.10px;font-size:15px;color:#a29c94;font-weight:400;font-family:'Liberation Mono',sans-serif;letter-spacing:1.29px;-webkit-text-stroke:0.3px currentColor">00</div>
<div class="t" id="t126" style="left:188.74px;top:273.10px;font-size:15px;color:#2c2c2c;font-weight:400;font-family:'Liberation Mono',sans-serif;letter-spacing:1.29px;-webkit-text-stroke:0.3px currentColor">00</div>
<div class="t" id="t127" style="left:219.61px;top:273.10px;font-size:15px;color:#a29c94;font-weight:400;font-family:'Liberation Mono',sans-serif;letter-spacing:1.29px;-webkit-text-stroke:0.3px currentColor">00</div>
<div class="t" id="t128" style="left:250.48000000000002px;top:273.10px;font-size:15px;color:#2c2c2c;font-weight:400;font-family:'Liberation Mono',sans-serif;letter-spacing:1.29px;-webkit-text-stroke:0.3px currentColor">00</div>
<div class="t" id="t129" style="left:281.35px;top:273.10px;font-size:15px;color:#a29c94;font-weight:400;font-family:'Liberation Mono',sans-serif;letter-spacing:1.29px;-webkit-text-stroke:0.3px currentColor">00</div>
<div class="t" id="t130" style="left:312.22px;top:273.10px;font-size:15px;color:#2c2c2c;font-weight:400;font-family:'Liberation Mono',sans-serif;letter-spacing:1.29px;-webkit-text-stroke:0.3px currentColor">00</div>
<div class="t" id="t131" style="left:343.09000000000003px;top:273.10px;font-size:15px;color:#a29c94;font-weight:400;font-family:'Liberation Mono',sans-serif;letter-spacing:1.29px;-webkit-text-stroke:0.3px currentColor">00</div>
<div class="t" id="t132" style="left:373.96000000000004px;top:273.10px;font-size:15px;color:#2c2c2c;font-weight:400;font-family:'Liberation Mono',sans-serif;letter-spacing:1.29px;-webkit-text-stroke:0.3px currentColor">00</div>
<div class="t" id="t133" style="left:404.83px;top:273.10px;font-size:15px;color:#a29c94;font-weight:400;font-family:'Liberation Mono',sans-serif;letter-spacing:1.29px;-webkit-text-stroke:0.3px currentColor">00</div>
<div class="t" id="t134" style="left:435.7px;top:273.10px;font-size:15px;color:#2c2c2c;font-weight:400;font-family:'Liberation Mono',sans-serif;letter-spacing:1.29px;-webkit-text-stroke:0.3px currentColor">00</div>
<div class="t" id="t135" style="left:466.57px;top:273.10px;font-size:15px;color:#a29c94;font-weight:400;font-family:'Liberation Mono',sans-serif;letter-spacing:1.29px;-webkit-text-stroke:0.3px currentColor">00</div>
<div class="t" id="t136" style="left:497.44px;top:273.10px;font-size:15px;color:#2c2c2c;font-weight:400;font-family:'Liberation Mono',sans-serif;letter-spacing:1.29px;-webkit-text-stroke:0.3px currentColor">00</div>
<div class="t" id="t137" style="left:528.31px;top:273.10px;font-size:15px;color:#a29c94;font-weight:400;font-family:'Liberation Mono',sans-serif;letter-spacing:1.29px;-webkit-text-stroke:0.3px currentColor">00</div>
<div class="t" id="t138" style="left:559.1800000000001px;top:273.10px;font-size:15px;color:#2c2c2c;font-weight:400;font-family:'Liberation Mono',sans-serif;letter-spacing:1.29px;-webkit-text-stroke:0.3px currentColor">00</div>
<div class="t" id="t139" style="left:590.05px;top:273.10px;font-size:15px;color:#a29c94;font-weight:400;font-family:'Liberation Mono',sans-serif;letter-spacing:1.29px;-webkit-text-stroke:0.3px currentColor">00</div>
<div class="t" id="t140" style="left:630.5px;top:273.10px;font-size:15px;color:#222;font-weight:400;font-family:'Liberation Mono',sans-serif;letter-spacing:1.29px;-webkit-text-stroke:0.3px currentColor">................</div>
<div class="t" id="t141" style="left:24px;top:293.74px;font-size:15px;color:#3c3cc8;font-weight:400;font-family:'Liberation Mono',sans-serif;letter-spacing:1.29px;-webkit-text-stroke:0.3px currentColor">00000060</div>
<div class="t" id="t142" style="left:127.0px;top:293.74px;font-size:15px;color:#2c2c2c;font-weight:400;font-family:'Liberation Mono',sans-serif;letter-spacing:1.29px;-webkit-text-stroke:0.3px currentColor">00</div>
<div class="t" id="t143" style="left:157.87px;top:293.74px;font-size:15px;color:#a29c94;font-weight:400;font-family:'Liberation Mono',sans-serif;letter-spacing:1.29px;-webkit-text-stroke:0.3px currentColor">00</div>
<div class="t" id="t144" style="left:188.74px;top:293.74px;font-size:15px;color:#2c2c2c;font-weight:400;font-family:'Liberation Mono',sans-serif;letter-spacing:1.29px;-webkit-text-stroke:0.3px currentColor">00</div>
<div class="t" id="t145" style="left:219.61px;top:293.74px;font-size:15px;color:#a29c94;font-weight:400;font-family:'Liberation Mono',sans-serif;letter-spacing:1.29px;-webkit-text-stroke:0.3px currentColor">00</div>
<div class="t" id="t146" style="left:250.48000000000002px;top:293.74px;font-size:15px;color:#2c2c2c;font-weight:400;font-family:'Liberation Mono',sans-serif;letter-spacing:1.29px;-webkit-text-stroke:0.3px currentColor">00</div>
<div class="t" id="t147" style="left:281.35px;top:293.74px;font-size:15px;color:#a29c94;font-weight:400;font-family:'Liberation Mono',sans-serif;letter-spacing:1.29px;-webkit-text-stroke:0.3px currentColor">00</div>
<div class="t" id="t148" style="left:312.22px;top:293.74px;font-size:15px;color:#2c2c2c;font-weight:400;font-family:'Liberation Mono',sans-serif;letter-spacing:1.29px;-webkit-text-stroke:0.3px currentColor">00</div>
<div class="t" id="t149" style="left:343.09000000000003px;top:293.74px;font-size:15px;color:#a29c94;font-weight:400;font-family:'Liberation Mono',sans-serif;letter-spacing:1.29px;-webkit-text-stroke:0.3px currentColor">00</div>
<div class="t" id="t150" style="left:373.96000000000004px;top:293.74px;font-size:15px;color:#2c2c2c;font-weight:400;font-family:'Liberation Mono',sans-serif;letter-spacing:1.29px;-webkit-text-stroke:0.3px currentColor">00</div>
<div class="t" id="t151" style="left:404.83px;top:293.74px;font-size:15px;color:#a29c94;font-weight:400;font-family:'Liberation Mono',sans-serif;letter-spacing:1.29px;-webkit-text-stroke:0.3px currentColor">00</div>
<div class="t" id="t152" style="left:435.7px;top:293.74px;font-size:15px;color:#2c2c2c;font-weight:400;font-family:'Liberation Mono',sans-serif;letter-spacing:1.29px;-webkit-text-stroke:0.3px currentColor">00</div>
<div class="t" id="t153" style="left:466.57px;top:293.74px;font-size:15px;color:#a29c94;font-weight:400;font-family:'Liberation Mono',sans-serif;letter-spacing:1.29px;-webkit-text-stroke:0.3px currentColor">00</div>
<div class="t" id="t154" style="left:497.44px;top:293.74px;font-size:15px;color:#2c2c2c;font-weight:400;font-family:'Liberation Mono',sans-serif;letter-spacing:1.29px;-webkit-text-stroke:0.3px currentColor">00</div>
<div class="t" id="t155" style="left:528.31px;top:293.74px;font-size:15px;color:#a29c94;font-weight:400;font-family:'Liberation Mono',sans-serif;letter-spacing:1.29px;-webkit-text-stroke:0.3px currentColor">00</div>
<div class="t" id="t156" style="left:559.1800000000001px;top:293.74px;font-size:15px;color:#2c2c2c;font-weight:400;font-family:'Liberation Mono',sans-serif;letter-spacing:1.29px;-webkit-text-stroke:0.3px currentColor">00</div>
<div class="t" id="t157" style="left:590.05px;top:293.74px;font-size:15px;color:#a29c94;font-weight:400;font-family:'Liberation Mono',sans-serif;letter-spacing:1.29px;-webkit-text-stroke:0.3px currentColor">00</div>
<div class="t" id="t158" style="left:630.5px;top:293.74px;font-size:15px;color:#222;font-weight:400;font-family:'Liberation Mono',sans-serif;letter-spacing:1.29px;-webkit-text-stroke:0.3px currentColor">................</div>
<div class="t" id="t159" style="left:24px;top:314.38px;font-size:15px;color:#3c3cc8;font-weight:400;font-family:'Liberation Mono',sans-serif;letter-spacing:1.29px;-webkit-text-stroke:0.3px currentColor">00000070</div>
<div class="t" id="t160" style="left:127.0px;top:314.38px;font-size:15px;color:#2c2c2c;font-weight:400;font-family:'Liberation Mono',sans-serif;letter-spacing:1.29px;-webkit-text-stroke:0.3px currentColor">00</div>
<div class="t" id="t161" style="left:157.87px;top:314.38px;font-size:15px;color:#a29c94;font-weight:400;font-family:'Liberation Mono',sans-serif;letter-spacing:1.29px;-webkit-text-stroke:0.3px currentColor">00</div>
<div class="t" id="t162" style="left:188.74px;top:314.38px;font-size:15px;color:#2c2c2c;font-weight:400;font-family:'Liberation Mono',sans-serif;letter-spacing:1.29px;-webkit-text-stroke:0.3px currentColor">00</div>
<div class="t" id="t163" style="left:219.61px;top:314.38px;font-size:15px;color:#a29c94;font-weight:400;font-family:'Liberation Mono',sans-serif;letter-spacing:1.29px;-webkit-text-stroke:0.3px currentColor">00</div>
<div class="t" id="t164" style="left:250.48000000000002px;top:314.38px;font-size:15px;color:#2c2c2c;font-weight:400;font-family:'Liberation Mono',sans-serif;letter-spacing:1.29px;-webkit-text-stroke:0.3px currentColor">00</div>
<div class="t" id="t165" style="left:281.35px;top:314.38px;font-size:15px;color:#a29c94;font-weight:400;font-family:'Liberation Mono',sans-serif;letter-spacing:1.29px;-webkit-text-stroke:0.3px currentColor">00</div>
<div class="t" id="t166" style="left:312.22px;top:314.38px;font-size:15px;color:#2c2c2c;font-weight:400;font-family:'Liberation Mono',sans-serif;letter-spacing:1.29px;-webkit-text-stroke:0.3px currentColor">00</div>
<div class="t" id="t167" style="left:343.09000000000003px;top:314.38px;font-size:15px;color:#a29c94;font-weight:400;font-family:'Liberation Mono',sans-serif;letter-spacing:1.29px;-webkit-text-stroke:0.3px currentColor">00</div>
<div class="t" id="t168" style="left:373.96000000000004px;top:314.38px;font-size:15px;color:#2c2c2c;font-weight:400;font-family:'Liberation Mono',sans-serif;letter-spacing:1.29px;-webkit-text-stroke:0.3px currentColor">00</div>
<div class="t" id="t169" style="left:404.83px;top:314.38px;font-size:15px;color:#a29c94;font-weight:400;font-family:'Liberation Mono',sans-serif;letter-spacing:1.29px;-webkit-text-stroke:0.3px currentColor">00</div>
<div class="t" id="t170" style="left:435.7px;top:314.38px;font-size:15px;color:#2c2c2c;font-weight:400;font-family:'Liberation Mono',sans-serif;letter-spacing:1.29px;-webkit-text-stroke:0.3px currentColor">00</div>
<div class="t" id="t171" style="left:466.57px;top:314.38px;font-size:15px;color:#a29c94;font-weight:400;font-family:'Liberation Mono',sans-serif;letter-spacing:1.29px;-webkit-text-stroke:0.3px currentColor">00</div>
<div class="t" id="t172" style="left:497.44px;top:314.38px;font-size:15px;color:#2c2c2c;font-weight:400;font-family:'Liberation Mono',sans-serif;letter-spacing:1.29px;-webkit-text-stroke:0.3px currentColor">00</div>
<div class="t" id="t173" style="left:528.31px;top:314.38px;font-size:15px;color:#a29c94;font-weight:400;font-family:'Liberation Mono',sans-serif;letter-spacing:1.29px;-webkit-text-stroke:0.3px currentColor">00</div>
<div class="t" id="t174" style="left:559.1800000000001px;top:314.38px;font-size:15px;color:#2c2c2c;font-weight:400;font-family:'Liberation Mono',sans-serif;letter-spacing:1.29px;-webkit-text-stroke:0.3px currentColor">00</div>
<div class="t" id="t175" style="left:590.05px;top:314.38px;font-size:15px;color:#a29c94;font-weight:400;font-family:'Liberation Mono',sans-serif;letter-spacing:1.29px;-webkit-text-stroke:0.3px currentColor">00</div>
<div class="t" id="t176" style="left:630.5px;top:314.38px;font-size:15px;color:#222;font-weight:400;font-family:'Liberation Mono',sans-serif;letter-spacing:1.29px;-webkit-text-stroke:0.3px currentColor">................</div>
<div class="t" id="t177" style="left:24px;top:335.02px;font-size:15px;color:#3c3cc8;font-weight:400;font-family:'Liberation Mono',sans-serif;letter-spacing:1.29px;-webkit-text-stroke:0.3px currentColor">00000080</div>
<div class="t" id="t178" style="left:127.0px;top:335.02px;font-size:15px;color:#2c2c2c;font-weight:400;font-family:'Liberation Mono',sans-serif;letter-spacing:1.29px;-webkit-text-stroke:0.3px currentColor">00</div>
<div class="t" id="t179" style="left:157.87px;top:335.02px;font-size:15px;color:#a29c94;font-weight:400;font-family:'Liberation Mono',sans-serif;letter-spacing:1.29px;-webkit-text-stroke:0.3px currentColor">00</div>
<div class="t" id="t180" style="left:188.74px;top:335.02px;font-size:15px;color:#2c2c2c;font-weight:400;font-family:'Liberation Mono',sans-serif;letter-spacing:1.29px;-webkit-text-stroke:0.3px currentColor">00</div>
<div class="t" id="t181" style="left:219.61px;top:335.02px;font-size:15px;color:#a29c94;font-weight:400;font-family:'Liberation Mono',sans-serif;letter-spacing:1.29px;-webkit-text-stroke:0.3px currentColor">00</div>
<div class="t" id="t182" style="left:250.48000000000002px;top:335.02px;font-size:15px;color:#2c2c2c;font-weight:400;font-family:'Liberation Mono',sans-serif;letter-spacing:1.29px;-webkit-text-stroke:0.3px currentColor">00</div>
<div class="t" id="t183" style="left:281.35px;top:335.02px;font-size:15px;color:#a29c94;font-weight:400;font-family:'Liberation Mono',sans-serif;letter-spacing:1.29px;-webkit-text-stroke:0.3px currentColor">00</div>
<div class="t" id="t184" style="left:312.22px;top:335.02px;font-size:15px;color:#2c2c2c;font-weight:400;font-family:'Liberation Mono',sans-serif;letter-spacing:1.29px;-webkit-text-stroke:0.3px currentColor">00</div>
<div class="t" id="t185" style="left:343.09000000000003px;top:335.02px;font-size:15px;color:#a29c94;font-weight:400;font-family:'Liberation Mono',sans-serif;letter-spacing:1.29px;-webkit-text-stroke:0.3px currentColor">00</div>
<div class="t" id="t186" style="left:373.96000000000004px;top:335.02px;font-size:15px;color:#2c2c2c;font-weight:400;font-family:'Liberation Mono',sans-serif;letter-spacing:1.29px;-webkit-text-stroke:0.3px currentColor">00</div>
<div class="t" id="t187" style="left:404.83px;top:335.02px;font-size:15px;color:#a29c94;font-weight:400;font-family:'Liberation Mono',sans-serif;letter-spacing:1.29px;-webkit-text-stroke:0.3px currentColor">00</div>
<div class="t" id="t188" style="left:435.7px;top:335.02px;font-size:15px;color:#2c2c2c;font-weight:400;font-family:'Liberation Mono',sans-serif;letter-spacing:1.29px;-webkit-text-stroke:0.3px currentColor">00</div>
<div class="t" id="t189" style="left:466.57px;top:335.02px;font-size:15px;color:#a29c94;font-weight:400;font-family:'Liberation Mono',sans-serif;letter-spacing:1.29px;-webkit-text-stroke:0.3px currentColor">00</div>
<div class="t" id="t190" style="left:497.44px;top:335.02px;font-size:15px;color:#2c2c2c;font-weight:400;font-family:'Liberation Mono',sans-serif;letter-spacing:1.29px;-webkit-text-stroke:0.3px currentColor">00</div>
<div class="t" id="t191" style="left:528.31px;top:335.02px;font-size:15px;color:#a29c94;font-weight:400;font-family:'Liberation Mono',sans-serif;letter-spacing:1.29px;-webkit-text-stroke:0.3px currentColor">00</div>
<div class="t" id="t192" style="left:559.1800000000001px;top:335.02px;font-size:15px;color:#2c2c2c;font-weight:400;font-family:'Liberation Mono',sans-serif;letter-spacing:1.29px;-webkit-text-stroke:0.3px currentColor">00</div>
<div class="t" id="t193" style="left:590.05px;top:335.02px;font-size:15px;color:#a29c94;font-weight:400;font-family:'Liberation Mono',sans-serif;letter-spacing:1.29px;-webkit-text-stroke:0.3px currentColor">00</div>
<div class="t" id="t194" style="left:630.5px;top:335.02px;font-size:15px;color:#222;font-weight:400;font-family:'Liberation Mono',sans-serif;letter-spacing:1.29px;-webkit-text-stroke:0.3px currentColor">................</div>
<div class="t" id="t195" style="left:24px;top:355.66px;font-size:15px;color:#3c3cc8;font-weight:400;font-family:'Liberation Mono',sans-serif;letter-spacing:1.29px;-webkit-text-stroke:0.3px currentColor">00000090</div>
<div class="t" id="t196" style="left:127.0px;top:355.66px;font-size:15px;color:#2c2c2c;font-weight:400;font-family:'Liberation Mono',sans-serif;letter-spacing:1.29px;-webkit-text-stroke:0.3px currentColor">00</div>
<div class="t" id="t197" style="left:157.87px;top:355.66px;font-size:15px;color:#a29c94;font-weight:400;font-family:'Liberation Mono',sans-serif;letter-spacing:1.29px;-webkit-text-stroke:0.3px currentColor">00</div>
<div class="t" id="t198" style="left:188.74px;top:355.66px;font-size:15px;color:#2c2c2c;font-weight:400;font-family:'Liberation Mono',sans-serif;letter-spacing:1.29px;-webkit-text-stroke:0.3px currentColor">00</div>
<div class="t" id="t199" style="left:219.61px;top:355.66px;font-size:15px;color:#a29c94;font-weight:400;font-family:'Liberation Mono',sans-serif;letter-spacing:1.29px;-webkit-text-stroke:0.3px currentColor">00</div>
<div class="t" id="t200" style="left:250.48000000000002px;top:355.66px;font-size:15px;color:#2c2c2c;font-weight:400;font-family:'Liberation Mono',sans-serif;letter-spacing:1.29px;-webkit-text-stroke:0.3px currentColor">00</div>
<div class="t" id="t201" style="left:281.35px;top:355.66px;font-size:15px;color:#a29c94;font-weight:400;font-family:'Liberation Mono',sans-serif;letter-spacing:1.29px;-webkit-text-stroke:0.3px currentColor">00</div>
<div class="t" id="t202" style="left:312.22px;top:355.66px;font-size:15px;color:#2c2c2c;font-weight:400;font-family:'Liberation Mono',sans-serif;letter-spacing:1.29px;-webkit-text-stroke:0.3px currentColor">00</div>
<div class="t" id="t203" style="left:343.09000000000003px;top:355.66px;font-size:15px;color:#a29c94;font-weight:400;font-family:'Liberation Mono',sans-serif;letter-spacing:1.29px;-webkit-text-stroke:0.3px currentColor">00</div>
<div class="t" id="t204" style="left:373.96000000000004px;top:355.66px;font-size:15px;color:#2c2c2c;font-weight:400;font-family:'Liberation Mono',sans-serif;letter-spacing:1.29px;-webkit-text-stroke:0.3px currentColor">00</div>
<div class="t" id="t205" style="left:404.83px;top:355.66px;font-size:15px;color:#a29c94;font-weight:400;font-family:'Liberation Mono',sans-serif;letter-spacing:1.29px;-webkit-text-stroke:0.3px currentColor">00</div>
<div class="t" id="t206" style="left:435.7px;top:355.66px;font-size:15px;color:#2c2c2c;font-weight:400;font-family:'Liberation Mono',sans-serif;letter-spacing:1.29px;-webkit-text-stroke:0.3px currentColor">00</div>
<div class="t" id="t207" style="left:466.57px;top:355.66px;font-size:15px;color:#a29c94;font-weight:400;font-family:'Liberation Mono',sans-serif;letter-spacing:1.29px;-webkit-text-stroke:0.3px currentColor">00</div>
<div class="t" id="t208" style="left:497.44px;top:355.66px;font-size:15px;color:#2c2c2c;font-weight:400;font-family:'Liberation Mono',sans-serif;letter-spacing:1.29px;-webkit-text-stroke:0.3px currentColor">00</div>
<div class="t" id="t209" style="left:528.31px;top:355.66px;font-size:15px;color:#a29c94;font-weight:400;font-family:'Liberation Mono',sans-serif;letter-spacing:1.29px;-webkit-text-stroke:0.3px currentColor">00</div>
<div class="t" id="t210" style="left:559.1800000000001px;top:355.66px;font-size:15px;color:#2c2c2c;font-weight:400;font-family:'Liberation Mono',sans-serif;letter-spacing:1.29px;-webkit-text-stroke:0.3px currentColor">00</div>
<div class="t" id="t211" style="left:590.05px;top:355.66px;font-size:15px;color:#a29c94;font-weight:400;font-family:'Liberation Mono',sans-serif;letter-spacing:1.29px;-webkit-text-stroke:0.3px currentColor">00</div>
<div class="t" id="t212" style="left:630.5px;top:355.66px;font-size:15px;color:#222;font-weight:400;font-family:'Liberation Mono',sans-serif;letter-spacing:1.29px;-webkit-text-stroke:0.3px currentColor">................</div>
<div class="t" id="t213" style="left:24px;top:376.30px;font-size:15px;color:#3c3cc8;font-weight:400;font-family:'Liberation Mono',sans-serif;letter-spacing:1.29px;-webkit-text-stroke:0.3px currentColor">000000A0</div>
<div class="t" id="t214" style="left:127.0px;top:376.30px;font-size:15px;color:#2c2c2c;font-weight:400;font-family:'Liberation Mono',sans-serif;letter-spacing:1.29px;-webkit-text-stroke:0.3px currentColor">00</div>
<div class="t" id="t215" style="left:157.87px;top:376.30px;font-size:15px;color:#a29c94;font-weight:400;font-family:'Liberation Mono',sans-serif;letter-spacing:1.29px;-webkit-text-stroke:0.3px currentColor">00</div>
<div class="t" id="t216" style="left:188.74px;top:376.30px;font-size:15px;color:#2c2c2c;font-weight:400;font-family:'Liberation Mono',sans-serif;letter-spacing:1.29px;-webkit-text-stroke:0.3px currentColor">00</div>
<div class="t" id="t217" style="left:219.61px;top:376.30px;font-size:15px;color:#a29c94;font-weight:400;font-family:'Liberation Mono',sans-serif;letter-spacing:1.29px;-webkit-text-stroke:0.3px currentColor">00</div>
<div class="t" id="t218" style="left:250.48000000000002px;top:376.30px;font-size:15px;color:#2c2c2c;font-weight:400;font-family:'Liberation Mono',sans-serif;letter-spacing:1.29px;-webkit-text-stroke:0.3px currentColor">00</div>
<div class="t" id="t219" style="left:281.35px;top:376.30px;font-size:15px;color:#a29c94;font-weight:400;font-family:'Liberation Mono',sans-serif;letter-spacing:1.29px;-webkit-text-stroke:0.3px currentColor">00</div>
<div class="t" id="t220" style="left:312.22px;top:376.30px;font-size:15px;color:#2c2c2c;font-weight:400;font-family:'Liberation Mono',sans-serif;letter-spacing:1.29px;-webkit-text-stroke:0.3px currentColor">00</div>
<div class="t" id="t221" style="left:343.09000000000003px;top:376.30px;font-size:15px;color:#a29c94;font-weight:400;font-family:'Liberation Mono',sans-serif;letter-spacing:1.29px;-webkit-text-stroke:0.3px currentColor">00</div>
<div class="t" id="t222" style="left:373.96000000000004px;top:376.30px;font-size:15px;color:#2c2c2c;font-weight:400;font-family:'Liberation Mono',sans-serif;letter-spacing:1.29px;-webkit-text-stroke:0.3px currentColor">00</div>
<div class="t" id="t223" style="left:404.83px;top:376.30px;font-size:15px;color:#a29c94;font-weight:400;font-family:'Liberation Mono',sans-serif;letter-spacing:1.29px;-webkit-text-stroke:0.3px currentColor">00</div>
<div class="t" id="t224" style="left:435.7px;top:376.30px;font-size:15px;color:#2c2c2c;font-weight:400;font-family:'Liberation Mono',sans-serif;letter-spacing:1.29px;-webkit-text-stroke:0.3px currentColor">00</div>
<div class="t" id="t225" style="left:466.57px;top:376.30px;font-size:15px;color:#a29c94;font-weight:400;font-family:'Liberation Mono',sans-serif;letter-spacing:1.29px;-webkit-text-stroke:0.3px currentColor">00</div>
<div class="t" id="t226" style="left:497.44px;top:376.30px;font-size:15px;color:#2c2c2c;font-weight:400;font-family:'Liberation Mono',sans-serif;letter-spacing:1.29px;-webkit-text-stroke:0.3px currentColor">00</div>
<div class="t" id="t227" style="left:528.31px;top:376.30px;font-size:15px;color:#a29c94;font-weight:400;font-family:'Liberation Mono',sans-serif;letter-spacing:1.29px;-webkit-text-stroke:0.3px currentColor">00</div>
<div class="t" id="t228" style="left:559.1800000000001px;top:376.30px;font-size:15px;color:#2c2c2c;font-weight:400;font-family:'Liberation Mono',sans-serif;letter-spacing:1.29px;-webkit-text-stroke:0.3px currentColor">00</div>
<div class="t" id="t229" style="left:590.05px;top:376.30px;font-size:15px;color:#a29c94;font-weight:400;font-family:'Liberation Mono',sans-serif;letter-spacing:1.29px;-webkit-text-stroke:0.3px currentColor">00</div>
<div class="t" id="t230" style="left:630.5px;top:376.30px;font-size:15px;color:#222;font-weight:400;font-family:'Liberation Mono',sans-serif;letter-spacing:1.29px;-webkit-text-stroke:0.3px currentColor">................</div>
<div class="t" id="t231" style="left:24px;top:396.94px;font-size:15px;color:#3c3cc8;font-weight:400;font-family:'Liberation Mono',sans-serif;letter-spacing:1.29px;-webkit-text-stroke:0.3px currentColor">000000B0</div>
<div class="t" id="t232" style="left:127.0px;top:396.94px;font-size:15px;color:#2c2c2c;font-weight:400;font-family:'Liberation Mono',sans-serif;letter-spacing:1.29px;-webkit-text-stroke:0.3px currentColor">00</div>
<div class="t" id="t233" style="left:157.87px;top:396.94px;font-size:15px;color:#a29c94;font-weight:400;font-family:'Liberation Mono',sans-serif;letter-spacing:1.29px;-webkit-text-stroke:0.3px currentColor">00</div>
<div class="t" id="t234" style="left:188.74px;top:396.94px;font-size:15px;color:#2c2c2c;font-weight:400;font-family:'Liberation Mono',sans-serif;letter-spacing:1.29px;-webkit-text-stroke:0.3px currentColor">00</div>
<div class="t" id="t235" style="left:219.61px;top:396.94px;font-size:15px;color:#a29c94;font-weight:400;font-family:'Liberation Mono',sans-serif;letter-spacing:1.29px;-webkit-text-stroke:0.3px currentColor">00</div>
<div class="t" id="t236" style="left:250.48000000000002px;top:396.94px;font-size:15px;color:#2c2c2c;font-weight:400;font-family:'Liberation Mono',sans-serif;letter-spacing:1.29px;-webkit-text-stroke:0.3px currentColor">00</div>
<div class="t" id="t237" style="left:281.35px;top:396.94px;font-size:15px;color:#a29c94;font-weight:400;font-family:'Liberation Mono',sans-serif;letter-spacing:1.29px;-webkit-text-stroke:0.3px currentColor">00</div>
<div class="t" id="t238" style="left:312.22px;top:396.94px;font-size:15px;color:#2c2c2c;font-weight:400;font-family:'Liberation Mono',sans-serif;letter-spacing:1.29px;-webkit-text-stroke:0.3px currentColor">00</div>
<div class="t" id="t239" style="left:343.09000000000003px;top:396.94px;font-size:15px;color:#a29c94;font-weight:400;font-family:'Liberation Mono',sans-serif;letter-spacing:1.29px;-webkit-text-stroke:0.3px currentColor">00</div>
<div class="t" id="t240" style="left:373.96000000000004px;top:396.94px;font-size:15px;color:#2c2c2c;font-weight:400;font-family:'Liberation Mono',sans-serif;letter-spacing:1.29px;-webkit-text-stroke:0.3px currentColor">00</div>
<div class="t" id="t241" style="left:404.83px;top:396.94px;font-size:15px;color:#a29c94;font-weight:400;font-family:'Liberation Mono',sans-serif;letter-spacing:1.29px;-webkit-text-stroke:0.3px currentColor">00</div>
<div class="t" id="t242" style="left:435.7px;top:396.94px;font-size:15px;color:#2c2c2c;font-weight:400;font-family:'Liberation Mono',sans-serif;letter-spacing:1.29px;-webkit-text-stroke:0.3px currentColor">00</div>
<div class="t" id="t243" style="left:466.57px;top:396.94px;font-size:15px;color:#a29c94;font-weight:400;font-family:'Liberation Mono',sans-serif;letter-spacing:1.29px;-webkit-text-stroke:0.3px currentColor">00</div>
<div class="t" id="t244" style="left:497.44px;top:396.94px;font-size:15px;color:#2c2c2c;font-weight:400;font-family:'Liberation Mono',sans-serif;letter-spacing:1.29px;-webkit-text-stroke:0.3px currentColor">00</div>
<div class="t" id="t245" style="left:528.31px;top:396.94px;font-size:15px;color:#a29c94;font-weight:400;font-family:'Liberation Mono',sans-serif;letter-spacing:1.29px;-webkit-text-stroke:0.3px currentColor">00</div>
<div class="t" id="t246" style="left:559.1800000000001px;top:396.94px;font-size:15px;color:#2c2c2c;font-weight:400;font-family:'Liberation Mono',sans-serif;letter-spacing:1.29px;-webkit-text-stroke:0.3px currentColor">00</div>
<div class="t" id="t247" style="left:590.05px;top:396.94px;font-size:15px;color:#a29c94;font-weight:400;font-family:'Liberation Mono',sans-serif;letter-spacing:1.29px;-webkit-text-stroke:0.3px currentColor">00</div>
<div class="t" id="t248" style="left:630.5px;top:396.94px;font-size:15px;color:#222;font-weight:400;font-family:'Liberation Mono',sans-serif;letter-spacing:1.29px;-webkit-text-stroke:0.3px currentColor">................</div>
<div class="t" id="t249" style="left:24px;top:417.58px;font-size:15px;color:#3c3cc8;font-weight:400;font-family:'Liberation Mono',sans-serif;letter-spacing:1.29px;-webkit-text-stroke:0.3px currentColor">000000C0</div>
<div class="t" id="t250" style="left:127.0px;top:417.58px;font-size:15px;color:#2c2c2c;font-weight:400;font-family:'Liberation Mono',sans-serif;letter-spacing:1.29px;-webkit-text-stroke:0.3px currentColor">00</div>
<div class="t" id="t251" style="left:157.87px;top:417.58px;font-size:15px;color:#a29c94;font-weight:400;font-family:'Liberation Mono',sans-serif;letter-spacing:1.29px;-webkit-text-stroke:0.3px currentColor">00</div>
<div class="t" id="t252" style="left:188.74px;top:417.58px;font-size:15px;color:#2c2c2c;font-weight:400;font-family:'Liberation Mono',sans-serif;letter-spacing:1.29px;-webkit-text-stroke:0.3px currentColor">00</div>
<div class="t" id="t253" style="left:219.61px;top:417.58px;font-size:15px;color:#a29c94;font-weight:400;font-family:'Liberation Mono',sans-serif;letter-spacing:1.29px;-webkit-text-stroke:0.3px currentColor">00</div>
<div class="t" id="t254" style="left:250.48000000000002px;top:417.58px;font-size:15px;color:#2c2c2c;font-weight:400;font-family:'Liberation Mono',sans-serif;letter-spacing:1.29px;-webkit-text-stroke:0.3px currentColor">00</div>
<div class="t" id="t255" style="left:281.35px;top:417.58px;font-size:15px;color:#a29c94;font-weight:400;font-family:'Liberation Mono',sans-serif;letter-spacing:1.29px;-webkit-text-stroke:0.3px currentColor">00</div>
<div class="t" id="t256" style="left:312.22px;top:417.58px;font-size:15px;color:#2c2c2c;font-weight:400;font-family:'Liberation Mono',sans-serif;letter-spacing:1.29px;-webkit-text-stroke:0.3px currentColor">00</div>
<div class="t" id="t257" style="left:343.09000000000003px;top:417.58px;font-size:15px;color:#a29c94;font-weight:400;font-family:'Liberation Mono',sans-serif;letter-spacing:1.29px;-webkit-text-stroke:0.3px currentColor">00</div>
<div class="t" id="t258" style="left:373.96000000000004px;top:417.58px;font-size:15px;color:#2c2c2c;font-weight:400;font-family:'Liberation Mono',sans-serif;letter-spacing:1.29px;-webkit-text-stroke:0.3px currentColor">00</div>
<div class="t" id="t259" style="left:404.83px;top:417.58px;font-size:15px;color:#a29c94;font-weight:400;font-family:'Liberation Mono',sans-serif;letter-spacing:1.29px;-webkit-text-stroke:0.3px currentColor">00</div>
<div class="t" id="t260" style="left:435.7px;top:417.58px;font-size:15px;color:#2c2c2c;font-weight:400;font-family:'Liberation Mono',sans-serif;letter-spacing:1.29px;-webkit-text-stroke:0.3px currentColor">00</div>
<div class="t" id="t261" style="left:466.57px;top:417.58px;font-size:15px;color:#a29c94;font-weight:400;font-family:'Liberation Mono',sans-serif;letter-spacing:1.29px;-webkit-text-stroke:0.3px currentColor">00</div>
<div class="t" id="t262" style="left:497.44px;top:417.58px;font-size:15px;color:#2c2c2c;font-weight:400;font-family:'Liberation Mono',sans-serif;letter-spacing:1.29px;-webkit-text-stroke:0.3px currentColor">00</div>
<div class="t" id="t263" style="left:528.31px;top:417.58px;font-size:15px;color:#a29c94;font-weight:400;font-family:'Liberation Mono',sans-serif;letter-spacing:1.29px;-webkit-text-stroke:0.3px currentColor">00</div>
<div class="t" id="t264" style="left:559.1800000000001px;top:417.58px;font-size:15px;color:#2c2c2c;font-weight:400;font-family:'Liberation Mono',sans-serif;letter-spacing:1.29px;-webkit-text-stroke:0.3px currentColor">00</div>
<div class="t" id="t265" style="left:590.05px;top:417.58px;font-size:15px;color:#a29c94;font-weight:400;font-family:'Liberation Mono',sans-serif;letter-spacing:1.29px;-webkit-text-stroke:0.3px currentColor">00</div>
<div class="t" id="t266" style="left:630.5px;top:417.58px;font-size:15px;color:#222;font-weight:400;font-family:'Liberation Mono',sans-serif;letter-spacing:1.29px;-webkit-text-stroke:0.3px currentColor">................</div>
<div class="t" id="t267" style="left:24px;top:438.22px;font-size:15px;color:#3c3cc8;font-weight:400;font-family:'Liberation Mono',sans-serif;letter-spacing:1.29px;-webkit-text-stroke:0.3px currentColor">000000D0</div>
<div class="t" id="t268" style="left:127.0px;top:438.22px;font-size:15px;color:#2c2c2c;font-weight:400;font-family:'Liberation Mono',sans-serif;letter-spacing:1.29px;-webkit-text-stroke:0.3px currentColor">00</div>
<div class="t" id="t269" style="left:157.87px;top:438.22px;font-size:15px;color:#a29c94;font-weight:400;font-family:'Liberation Mono',sans-serif;letter-spacing:1.29px;-webkit-text-stroke:0.3px currentColor">00</div>
<div class="t" id="t270" style="left:188.74px;top:438.22px;font-size:15px;color:#2c2c2c;font-weight:400;font-family:'Liberation Mono',sans-serif;letter-spacing:1.29px;-webkit-text-stroke:0.3px currentColor">00</div>
<div class="t" id="t271" style="left:219.61px;top:438.22px;font-size:15px;color:#a29c94;font-weight:400;font-family:'Liberation Mono',sans-serif;letter-spacing:1.29px;-webkit-text-stroke:0.3px currentColor">00</div>
<div class="t" id="t272" style="left:250.48000000000002px;top:438.22px;font-size:15px;color:#2c2c2c;font-weight:400;font-family:'Liberation Mono',sans-serif;letter-spacing:1.29px;-webkit-text-stroke:0.3px currentColor">00</div>
<div class="t" id="t273" style="left:281.35px;top:438.22px;font-size:15px;color:#a29c94;font-weight:400;font-family:'Liberation Mono',sans-serif;letter-spacing:1.29px;-webkit-text-stroke:0.3px currentColor">00</div>
<div class="t" id="t274" style="left:312.22px;top:438.22px;font-size:15px;color:#2c2c2c;font-weight:400;font-family:'Liberation Mono',sans-serif;letter-spacing:1.29px;-webkit-text-stroke:0.3px currentColor">00</div>
<div class="t" id="t275" style="left:343.09000000000003px;top:438.22px;font-size:15px;color:#a29c94;font-weight:400;font-family:'Liberation Mono',sans-serif;letter-spacing:1.29px;-webkit-text-stroke:0.3px currentColor">00</div>
<div class="t" id="t276" style="left:373.96000000000004px;top:438.22px;font-size:15px;color:#2c2c2c;font-weight:400;font-family:'Liberation Mono',sans-serif;letter-spacing:1.29px;-webkit-text-stroke:0.3px currentColor">00</div>
<div class="t" id="t277" style="left:404.83px;top:438.22px;font-size:15px;color:#a29c94;font-weight:400;font-family:'Liberation Mono',sans-serif;letter-spacing:1.29px;-webkit-text-stroke:0.3px currentColor">00</div>
<div class="t" id="t278" style="left:435.7px;top:438.22px;font-size:15px;color:#2c2c2c;font-weight:400;font-family:'Liberation Mono',sans-serif;letter-spacing:1.29px;-webkit-text-stroke:0.3px currentColor">00</div>
<div class="t" id="t279" style="left:466.57px;top:438.22px;font-size:15px;color:#a29c94;font-weight:400;font-family:'Liberation Mono',sans-serif;letter-spacing:1.29px;-webkit-text-stroke:0.3px currentColor">00</div>
<div class="t" id="t280" style="left:497.44px;top:438.22px;font-size:15px;color:#2c2c2c;font-weight:400;font-family:'Liberation Mono',sans-serif;letter-spacing:1.29px;-webkit-text-stroke:0.3px currentColor">00</div>
<div class="t" id="t281" style="left:528.31px;top:438.22px;font-size:15px;color:#a29c94;font-weight:400;font-family:'Liberation Mono',sans-serif;letter-spacing:1.29px;-webkit-text-stroke:0.3px currentColor">00</div>
<div class="t" id="t282" style="left:559.1800000000001px;top:438.22px;font-size:15px;color:#2c2c2c;font-weight:400;font-family:'Liberation Mono',sans-serif;letter-spacing:1.29px;-webkit-text-stroke:0.3px currentColor">00</div>
<div class="t" id="t283" style="left:590.05px;top:438.22px;font-size:15px;color:#a29c94;font-weight:400;font-family:'Liberation Mono',sans-serif;letter-spacing:1.29px;-webkit-text-stroke:0.3px currentColor">00</div>
<div class="t" id="t284" style="left:630.5px;top:438.22px;font-size:15px;color:#222;font-weight:400;font-family:'Liberation Mono',sans-serif;letter-spacing:1.29px;-webkit-text-stroke:0.3px currentColor">................</div>
<div class="t" id="t285" style="left:24px;top:458.86px;font-size:15px;color:#3c3cc8;font-weight:400;font-family:'Liberation Mono',sans-serif;letter-spacing:1.29px;-webkit-text-stroke:0.3px currentColor">000000E0</div>
<div class="t" id="t286" style="left:127.0px;top:458.86px;font-size:15px;color:#2c2c2c;font-weight:400;font-family:'Liberation Mono',sans-serif;letter-spacing:1.29px;-webkit-text-stroke:0.3px currentColor">00</div>
<div class="t" id="t287" style="left:157.87px;top:458.86px;font-size:15px;color:#a29c94;font-weight:400;font-family:'Liberation Mono',sans-serif;letter-spacing:1.29px;-webkit-text-stroke:0.3px currentColor">00</div>
<div class="t" id="t288" style="left:188.74px;top:458.86px;font-size:15px;color:#2c2c2c;font-weight:400;font-family:'Liberation Mono',sans-serif;letter-spacing:1.29px;-webkit-text-stroke:0.3px currentColor">00</div>
<div class="t" id="t289" style="left:219.61px;top:458.86px;font-size:15px;color:#a29c94;font-weight:400;font-family:'Liberation Mono',sans-serif;letter-spacing:1.29px;-webkit-text-stroke:0.3px currentColor">00</div>
<div class="t" id="t290" style="left:250.48000000000002px;top:458.86px;font-size:15px;color:#2c2c2c;font-weight:400;font-family:'Liberation Mono',sans-serif;letter-spacing:1.29px;-webkit-text-stroke:0.3px currentColor">00</div>
<div class="t" id="t291" style="left:281.35px;top:458.86px;font-size:15px;color:#a29c94;font-weight:400;font-family:'Liberation Mono',sans-serif;letter-spacing:1.29px;-webkit-text-stroke:0.3px currentColor">00</div>
<div class="t" id="t292" style="left:312.22px;top:458.86px;font-size:15px;color:#2c2c2c;font-weight:400;font-family:'Liberation Mono',sans-serif;letter-spacing:1.29px;-webkit-text-stroke:0.3px currentColor">00</div>
<div class="t" id="t293" style="left:343.09000000000003px;top:458.86px;font-size:15px;color:#a29c94;font-weight:400;font-family:'Liberation Mono',sans-serif;letter-spacing:1.29px;-webkit-text-stroke:0.3px currentColor">00</div>
<div class="t" id="t294" style="left:373.96000000000004px;top:458.86px;font-size:15px;color:#2c2c2c;font-weight:400;font-family:'Liberation Mono',sans-serif;letter-spacing:1.29px;-webkit-text-stroke:0.3px currentColor">00</div>
<div class="t" id="t295" style="left:404.83px;top:458.86px;font-size:15px;color:#a29c94;font-weight:400;font-family:'Liberation Mono',sans-serif;letter-spacing:1.29px;-webkit-text-stroke:0.3px currentColor">00</div>
<div class="t" id="t296" style="left:435.7px;top:458.86px;font-size:15px;color:#2c2c2c;font-weight:400;font-family:'Liberation Mono',sans-serif;letter-spacing:1.29px;-webkit-text-stroke:0.3px currentColor">00</div>
<div class="t" id="t297" style="left:466.57px;top:458.86px;font-size:15px;color:#a29c94;font-weight:400;font-family:'Liberation Mono',sans-serif;letter-spacing:1.29px;-webkit-text-stroke:0.3px currentColor">00</div>
<div class="t" id="t298" style="left:497.44px;top:458.86px;font-size:15px;color:#2c2c2c;font-weight:400;font-family:'Liberation Mono',sans-serif;letter-spacing:1.29px;-webkit-text-stroke:0.3px currentColor">00</div>
<div class="t" id="t299" style="left:528.31px;top:458.86px;font-size:15px;color:#a29c94;font-weight:400;font-family:'Liberation Mono',sans-serif;letter-spacing:1.29px;-webkit-text-stroke:0.3px currentColor">00</div>
<div class="t" id="t300" style="left:559.1800000000001px;top:458.86px;font-size:15px;color:#2c2c2c;font-weight:400;font-family:'Liberation Mono',sans-serif;letter-spacing:1.29px;-webkit-text-stroke:0.3px currentColor">00</div>
<div class="t" id="t301" style="left:590.05px;top:458.86px;font-size:15px;color:#a29c94;font-weight:400;font-family:'Liberation Mono',sans-serif;letter-spacing:1.29px;-webkit-text-stroke:0.3px currentColor">00</div>
<div class="t" id="t302" style="left:630.5px;top:458.86px;font-size:15px;color:#222;font-weight:400;font-family:'Liberation Mono',sans-serif;letter-spacing:1.29px;-webkit-text-stroke:0.3px currentColor">................</div>
<div class="t" id="t303" style="left:24px;top:479.50px;font-size:15px;color:#3c3cc8;font-weight:400;font-family:'Liberation Mono',sans-serif;letter-spacing:1.29px;-webkit-text-stroke:0.3px currentColor">000000F0</div>
<div class="t" id="t304" style="left:127.0px;top:479.50px;font-size:15px;color:#2c2c2c;font-weight:400;font-family:'Liberation Mono',sans-serif;letter-spacing:1.29px;-webkit-text-stroke:0.3px currentColor">00</div>
<div class="t" id="t305" style="left:157.87px;top:479.50px;font-size:15px;color:#a29c94;font-weight:400;font-family:'Liberation Mono',sans-serif;letter-spacing:1.29px;-webkit-text-stroke:0.3px currentColor">00</div>
<div class="t" id="t306" style="left:188.74px;top:479.50px;font-size:15px;color:#2c2c2c;font-weight:400;font-family:'Liberation Mono',sans-serif;letter-spacing:1.29px;-webkit-text-stroke:0.3px currentColor">00</div>
<div class="t" id="t307" style="left:219.61px;top:479.50px;font-size:15px;color:#a29c94;font-weight:400;font-family:'Liberation Mono',sans-serif;letter-spacing:1.29px;-webkit-text-stroke:0.3px currentColor">00</div>
<div class="t" id="t308" style="left:250.48000000000002px;top:479.50px;font-size:15px;color:#2c2c2c;font-weight:400;font-family:'Liberation Mono',sans-serif;letter-spacing:1.29px;-webkit-text-stroke:0.3px currentColor">00</div>
<div class="t" id="t309" style="left:281.35px;top:479.50px;font-size:15px;color:#a29c94;font-weight:400;font-family:'Liberation Mono',sans-serif;letter-spacing:1.29px;-webkit-text-stroke:0.3px currentColor">00</div>
<div class="t" id="t310" style="left:312.22px;top:479.50px;font-size:15px;color:#2c2c2c;font-weight:400;font-family:'Liberation Mono',sans-serif;letter-spacing:1.29px;-webkit-text-stroke:0.3px currentColor">00</div>
<div class="t" id="t311" style="left:343.09000000000003px;top:479.50px;font-size:15px;color:#a29c94;font-weight:400;font-family:'Liberation Mono',sans-serif;letter-spacing:1.29px;-webkit-text-stroke:0.3px currentColor">00</div>
<div class="t" id="t312" style="left:373.96000000000004px;top:479.50px;font-size:15px;color:#2c2c2c;font-weight:400;font-family:'Liberation Mono',sans-serif;letter-spacing:1.29px;-webkit-text-stroke:0.3px currentColor">00</div>
<div class="t" id="t313" style="left:404.83px;top:479.50px;font-size:15px;color:#a29c94;font-weight:400;font-family:'Liberation Mono',sans-serif;letter-spacing:1.29px;-webkit-text-stroke:0.3px currentColor">00</div>
<div class="t" id="t314" style="left:435.7px;top:479.50px;font-size:15px;color:#2c2c2c;font-weight:400;font-family:'Liberation Mono',sans-serif;letter-spacing:1.29px;-webkit-text-stroke:0.3px currentColor">00</div>
<div class="t" id="t315" style="left:466.57px;top:479.50px;font-size:15px;color:#a29c94;font-weight:400;font-family:'Liberation Mono',sans-serif;letter-spacing:1.29px;-webkit-text-stroke:0.3px currentColor">00</div>
<div class="t" id="t316" style="left:497.44px;top:479.50px;font-size:15px;color:#2c2c2c;font-weight:400;font-family:'Liberation Mono',sans-serif;letter-spacing:1.29px;-webkit-text-stroke:0.3px currentColor">00</div>
<div class="t" id="t317" style="left:528.31px;top:479.50px;font-size:15px;color:#a29c94;font-weight:400;font-family:'Liberation Mono',sans-serif;letter-spacing:1.29px;-webkit-text-stroke:0.3px currentColor">00</div>
<div class="t" id="t318" style="left:559.1800000000001px;top:479.50px;font-size:15px;color:#2c2c2c;font-weight:400;font-family:'Liberation Mono',sans-serif;letter-spacing:1.29px;-webkit-text-stroke:0.3px currentColor">00</div>
<div class="t" id="t319" style="left:590.05px;top:479.50px;font-size:15px;color:#a29c94;font-weight:400;font-family:'Liberation Mono',sans-serif;letter-spacing:1.29px;-webkit-text-stroke:0.3px currentColor">00</div>
<div class="t" id="t320" style="left:630.5px;top:479.50px;font-size:15px;color:#222;font-weight:400;font-family:'Liberation Mono',sans-serif;letter-spacing:1.29px;-webkit-text-stroke:0.3px currentColor">................</div>
<div class="t" id="t321" style="left:24px;top:500.14px;font-size:15px;color:#3c3cc8;font-weight:400;font-family:'Liberation Mono',sans-serif;letter-spacing:1.29px;-webkit-text-stroke:0.3px currentColor">00000100</div>
<div class="t" id="t322" style="left:127.0px;top:500.14px;font-size:15px;color:#2c2c2c;font-weight:400;font-family:'Liberation Mono',sans-serif;letter-spacing:1.29px;-webkit-text-stroke:0.3px currentColor">00</div>
<div class="t" id="t323" style="left:157.87px;top:500.14px;font-size:15px;color:#a29c94;font-weight:400;font-family:'Liberation Mono',sans-serif;letter-spacing:1.29px;-webkit-text-stroke:0.3px currentColor">00</div>
<div class="t" id="t324" style="left:188.74px;top:500.14px;font-size:15px;color:#2c2c2c;font-weight:400;font-family:'Liberation Mono',sans-serif;letter-spacing:1.29px;-webkit-text-stroke:0.3px currentColor">00</div>
<div class="t" id="t325" style="left:219.61px;top:500.14px;font-size:15px;color:#a29c94;font-weight:400;font-family:'Liberation Mono',sans-serif;letter-spacing:1.29px;-webkit-text-stroke:0.3px currentColor">00</div>
<div class="t" id="t326" style="left:250.48000000000002px;top:500.14px;font-size:15px;color:#2c2c2c;font-weight:400;font-family:'Liberation Mono',sans-serif;letter-spacing:1.29px;-webkit-text-stroke:0.3px currentColor">00</div>
<div class="t" id="t327" style="left:281.35px;top:500.14px;font-size:15px;color:#a29c94;font-weight:400;font-family:'Liberation Mono',sans-serif;letter-spacing:1.29px;-webkit-text-stroke:0.3px currentColor">00</div>
<div class="t" id="t328" style="left:312.22px;top:500.14px;font-size:15px;color:#2c2c2c;font-weight:400;font-family:'Liberation Mono',sans-serif;letter-spacing:1.29px;-webkit-text-stroke:0.3px currentColor">00</div>
<div class="t" id="t329" style="left:343.09000000000003px;top:500.14px;font-size:15px;color:#a29c94;font-weight:400;font-family:'Liberation Mono',sans-serif;letter-spacing:1.29px;-webkit-text-stroke:0.3px currentColor">00</div>
<div class="t" id="t330" style="left:373.96000000000004px;top:500.14px;font-size:15px;color:#2c2c2c;font-weight:400;font-family:'Liberation Mono',sans-serif;letter-spacing:1.29px;-webkit-text-stroke:0.3px currentColor">00</div>
<div class="t" id="t331" style="left:404.83px;top:500.14px;font-size:15px;color:#a29c94;font-weight:400;font-family:'Liberation Mono',sans-serif;letter-spacing:1.29px;-webkit-text-stroke:0.3px currentColor">00</div>
<div class="t" id="t332" style="left:435.7px;top:500.14px;font-size:15px;color:#2c2c2c;font-weight:400;font-family:'Liberation Mono',sans-serif;letter-spacing:1.29px;-webkit-text-stroke:0.3px currentColor">00</div>
<div class="t" id="t333" style="left:466.57px;top:500.14px;font-size:15px;color:#a29c94;font-weight:400;font-family:'Liberation Mono',sans-serif;letter-spacing:1.29px;-webkit-text-stroke:0.3px currentColor">00</div>
<div class="t" id="t334" style="left:497.44px;top:500.14px;font-size:15px;color:#2c2c2c;font-weight:400;font-family:'Liberation Mono',sans-serif;letter-spacing:1.29px;-webkit-text-stroke:0.3px currentColor">00</div>
<div class="t" id="t335" style="left:528.31px;top:500.14px;font-size:15px;color:#a29c94;font-weight:400;font-family:'Liberation Mono',sans-serif;letter-spacing:1.29px;-webkit-text-stroke:0.3px currentColor">00</div>
<div class="t" id="t336" style="left:559.1800000000001px;top:500.14px;font-size:15px;color:#2c2c2c;font-weight:400;font-family:'Liberation Mono',sans-serif;letter-spacing:1.29px;-webkit-text-stroke:0.3px currentColor">00</div>
<div class="t" id="t337" style="left:590.05px;top:500.14px;font-size:15px;color:#a29c94;font-weight:400;font-family:'Liberation Mono',sans-serif;letter-spacing:1.29px;-webkit-text-stroke:0.3px currentColor">00</div>
<div class="t" id="t338" style="left:630.5px;top:500.14px;font-size:15px;color:#222;font-weight:400;font-family:'Liberation Mono',sans-serif;letter-spacing:1.29px;-webkit-text-stroke:0.3px currentColor">................</div>
<div class="t" id="t339" style="left:24px;top:520.78px;font-size:15px;color:#3c3cc8;font-weight:400;font-family:'Liberation Mono',sans-serif;letter-spacing:1.29px;-webkit-text-stroke:0.3px currentColor">00000110</div>
<div class="t" id="t340" style="left:127.0px;top:520.78px;font-size:15px;color:#2c2c2c;font-weight:400;font-family:'Liberation Mono',sans-serif;letter-spacing:1.29px;-webkit-text-stroke:0.3px currentColor">00</div>
<div class="t" id="t341" style="left:157.87px;top:520.78px;font-size:15px;color:#a29c94;font-weight:400;font-family:'Liberation Mono',sans-serif;letter-spacing:1.29px;-webkit-text-stroke:0.3px currentColor">00</div>
<div class="t" id="t342" style="left:188.74px;top:520.78px;font-size:15px;color:#2c2c2c;font-weight:400;font-family:'Liberation Mono',sans-serif;letter-spacing:1.29px;-webkit-text-stroke:0.3px currentColor">00</div>
<div class="t" id="t343" style="left:219.61px;top:520.78px;font-size:15px;color:#a29c94;font-weight:400;font-family:'Liberation Mono',sans-serif;letter-spacing:1.29px;-webkit-text-stroke:0.3px currentColor">00</div>
<div class="t" id="t344" style="left:250.48000000000002px;top:520.78px;font-size:15px;color:#2c2c2c;font-weight:400;font-family:'Liberation Mono',sans-serif;letter-spacing:1.29px;-webkit-text-stroke:0.3px currentColor">00</div>
<div class="t" id="t345" style="left:281.35px;top:520.78px;font-size:15px;color:#a29c94;font-weight:400;font-family:'Liberation Mono',sans-serif;letter-spacing:1.29px;-webkit-text-stroke:0.3px currentColor">00</div>
<div class="t" id="t346" style="left:312.22px;top:520.78px;font-size:15px;color:#2c2c2c;font-weight:400;font-family:'Liberation Mono',sans-serif;letter-spacing:1.29px;-webkit-text-stroke:0.3px currentColor">00</div>
<div class="t" id="t347" style="left:343.09000000000003px;top:520.78px;font-size:15px;color:#a29c94;font-weight:400;font-family:'Liberation Mono',sans-serif;letter-spacing:1.29px;-webkit-text-stroke:0.3px currentColor">00</div>
<div class="t" id="t348" style="left:373.96000000000004px;top:520.78px;font-size:15px;color:#2c2c2c;font-weight:400;font-family:'Liberation Mono',sans-serif;letter-spacing:1.29px;-webkit-text-stroke:0.3px currentColor">00</div>
<div class="t" id="t349" style="left:404.83px;top:520.78px;font-size:15px;color:#a29c94;font-weight:400;font-family:'Liberation Mono',sans-serif;letter-spacing:1.29px;-webkit-text-stroke:0.3px currentColor">00</div>
<div class="t" id="t350" style="left:435.7px;top:520.78px;font-size:15px;color:#2c2c2c;font-weight:400;font-family:'Liberation Mono',sans-serif;letter-spacing:1.29px;-webkit-text-stroke:0.3px currentColor">00</div>
<div class="t" id="t351" style="left:466.57px;top:520.78px;font-size:15px;color:#a29c94;font-weight:400;font-family:'Liberation Mono',sans-serif;letter-spacing:1.29px;-webkit-text-stroke:0.3px currentColor">00</div>
<div class="t" id="t352" style="left:497.44px;top:520.78px;font-size:15px;color:#2c2c2c;font-weight:400;font-family:'Liberation Mono',sans-serif;letter-spacing:1.29px;-webkit-text-stroke:0.3px currentColor">00</div>
<div class="t" id="t353" style="left:528.31px;top:520.78px;font-size:15px;color:#a29c94;font-weight:400;font-family:'Liberation Mono',sans-serif;letter-spacing:1.29px;-webkit-text-stroke:0.3px currentColor">00</div>
<div class="t" id="t354" style="left:559.1800000000001px;top:520.78px;font-size:15px;color:#2c2c2c;font-weight:400;font-family:'Liberation Mono',sans-serif;letter-spacing:1.29px;-webkit-text-stroke:0.3px currentColor">00</div>
<div class="t" id="t355" style="left:590.05px;top:520.78px;font-size:15px;color:#a29c94;font-weight:400;font-family:'Liberation Mono',sans-serif;letter-spacing:1.29px;-webkit-text-stroke:0.3px currentColor">00</div>
<div class="t" id="t356" style="left:630.5px;top:520.78px;font-size:15px;color:#222;font-weight:400;font-family:'Liberation Mono',sans-serif;letter-spacing:1.29px;-webkit-text-stroke:0.3px currentColor">................</div>
<div class="t" id="t357" style="left:24px;top:541.42px;font-size:15px;color:#3c3cc8;font-weight:400;font-family:'Liberation Mono',sans-serif;letter-spacing:1.29px;-webkit-text-stroke:0.3px currentColor">00000120</div>
<div class="t" id="t358" style="left:127.0px;top:541.42px;font-size:15px;color:#2c2c2c;font-weight:400;font-family:'Liberation Mono',sans-serif;letter-spacing:1.29px;-webkit-text-stroke:0.3px currentColor">00</div>
<div class="t" id="t359" style="left:157.87px;top:541.42px;font-size:15px;color:#a29c94;font-weight:400;font-family:'Liberation Mono',sans-serif;letter-spacing:1.29px;-webkit-text-stroke:0.3px currentColor">00</div>
<div class="t" id="t360" style="left:188.74px;top:541.42px;font-size:15px;color:#2c2c2c;font-weight:400;font-family:'Liberation Mono',sans-serif;letter-spacing:1.29px;-webkit-text-stroke:0.3px currentColor">00</div>
<div class="t" id="t361" style="left:219.61px;top:541.42px;font-size:15px;color:#a29c94;font-weight:400;font-family:'Liberation Mono',sans-serif;letter-spacing:1.29px;-webkit-text-stroke:0.3px currentColor">00</div>
<div class="t" id="t362" style="left:250.48000000000002px;top:541.42px;font-size:15px;color:#2c2c2c;font-weight:400;font-family:'Liberation Mono',sans-serif;letter-spacing:1.29px;-webkit-text-stroke:0.3px currentColor">00</div>
<div class="t" id="t363" style="left:281.35px;top:541.42px;font-size:15px;color:#a29c94;font-weight:400;font-family:'Liberation Mono',sans-serif;letter-spacing:1.29px;-webkit-text-stroke:0.3px currentColor">00</div>
<div class="t" id="t364" style="left:312.22px;top:541.42px;font-size:15px;color:#2c2c2c;font-weight:400;font-family:'Liberation Mono',sans-serif;letter-spacing:1.29px;-webkit-text-stroke:0.3px currentColor">00</div>
<div class="t" id="t365" style="left:343.09000000000003px;top:541.42px;font-size:15px;color:#a29c94;font-weight:400;font-family:'Liberation Mono',sans-serif;letter-spacing:1.29px;-webkit-text-stroke:0.3px currentColor">00</div>
<div class="t" id="t366" style="left:373.96000000000004px;top:541.42px;font-size:15px;color:#2c2c2c;font-weight:400;font-family:'Liberation Mono',sans-serif;letter-spacing:1.29px;-webkit-text-stroke:0.3px currentColor">00</div>
<div class="t" id="t367" style="left:404.83px;top:541.42px;font-size:15px;color:#a29c94;font-weight:400;font-family:'Liberation Mono',sans-serif;letter-spacing:1.29px;-webkit-text-stroke:0.3px currentColor">00</div>
<div class="t" id="t368" style="left:435.7px;top:541.42px;font-size:15px;color:#2c2c2c;font-weight:400;font-family:'Liberation Mono',sans-serif;letter-spacing:1.29px;-webkit-text-stroke:0.3px currentColor">00</div>
<div class="t" id="t369" style="left:466.57px;top:541.42px;font-size:15px;color:#a29c94;font-weight:400;font-family:'Liberation Mono',sans-serif;letter-spacing:1.29px;-webkit-text-stroke:0.3px currentColor">00</div>
<div class="t" id="t370" style="left:497.44px;top:541.42px;font-size:15px;color:#2c2c2c;font-weight:400;font-family:'Liberation Mono',sans-serif;letter-spacing:1.29px;-webkit-text-stroke:0.3px currentColor">00</div>
<div class="t" id="t371" style="left:528.31px;top:541.42px;font-size:15px;color:#a29c94;font-weight:400;font-family:'Liberation Mono',sans-serif;letter-spacing:1.29px;-webkit-text-stroke:0.3px currentColor">00</div>
<div class="t" id="t372" style="left:559.1800000000001px;top:541.42px;font-size:15px;color:#2c2c2c;font-weight:400;font-family:'Liberation Mono',sans-serif;letter-spacing:1.29px;-webkit-text-stroke:0.3px currentColor">00</div>
<div class="t" id="t373" style="left:590.05px;top:541.42px;font-size:15px;color:#a29c94;font-weight:400;font-family:'Liberation Mono',sans-serif;letter-spacing:1.29px;-webkit-text-stroke:0.3px currentColor">00</div>
<div class="t" id="t374" style="left:630.5px;top:541.42px;font-size:15px;color:#222;font-weight:400;font-family:'Liberation Mono',sans-serif;letter-spacing:1.29px;-webkit-text-stroke:0.3px currentColor">................</div>
<div class="t" id="t375" style="left:24px;top:562.06px;font-size:15px;color:#3c3cc8;font-weight:400;font-family:'Liberation Mono',sans-serif;letter-spacing:1.29px;-webkit-text-stroke:0.3px currentColor">00000130</div>
<div class="t" id="t376" style="left:127.0px;top:562.06px;font-size:15px;color:#2c2c2c;font-weight:400;font-family:'Liberation Mono',sans-serif;letter-spacing:1.29px;-webkit-text-stroke:0.3px currentColor">00</div>
<div class="t" id="t377" style="left:157.87px;top:562.06px;font-size:15px;color:#a29c94;font-weight:400;font-family:'Liberation Mono',sans-serif;letter-spacing:1.29px;-webkit-text-stroke:0.3px currentColor">00</div>
<div class="t" id="t378" style="left:188.74px;top:562.06px;font-size:15px;color:#2c2c2c;font-weight:400;font-family:'Liberation Mono',sans-serif;letter-spacing:1.29px;-webkit-text-stroke:0.3px currentColor">00</div>
<div class="t" id="t379" style="left:219.61px;top:562.06px;font-size:15px;color:#a29c94;font-weight:400;font-family:'Liberation Mono',sans-serif;letter-spacing:1.29px;-webkit-text-stroke:0.3px currentColor">00</div>
<div class="t" id="t380" style="left:250.48000000000002px;top:562.06px;font-size:15px;color:#2c2c2c;font-weight:400;font-family:'Liberation Mono',sans-serif;letter-spacing:1.29px;-webkit-text-stroke:0.3px currentColor">00</div>
<div class="t" id="t381" style="left:281.35px;top:562.06px;font-size:15px;color:#a29c94;font-weight:400;font-family:'Liberation Mono',sans-serif;letter-spacing:1.29px;-webkit-text-stroke:0.3px currentColor">00</div>
<div class="t" id="t382" style="left:312.22px;top:562.06px;font-size:15px;color:#2c2c2c;font-weight:400;font-family:'Liberation Mono',sans-serif;letter-spacing:1.29px;-webkit-text-stroke:0.3px currentColor">00</div>
<div class="t" id="t383" style="left:343.09000000000003px;top:562.06px;font-size:15px;color:#a29c94;font-weight:400;font-family:'Liberation Mono',sans-serif;letter-spacing:1.29px;-webkit-text-stroke:0.3px currentColor">00</div>
<div class="t" id="t384" style="left:373.96000000000004px;top:562.06px;font-size:15px;color:#2c2c2c;font-weight:400;font-family:'Liberation Mono',sans-serif;letter-spacing:1.29px;-webkit-text-stroke:0.3px currentColor">00</div>
<div class="t" id="t385" style="left:404.83px;top:562.06px;font-size:15px;color:#a29c94;font-weight:400;font-family:'Liberation Mono',sans-serif;letter-spacing:1.29px;-webkit-text-stroke:0.3px currentColor">00</div>
<div class="t" id="t386" style="left:435.7px;top:562.06px;font-size:15px;color:#2c2c2c;font-weight:400;font-family:'Liberation Mono',sans-serif;letter-spacing:1.29px;-webkit-text-stroke:0.3px currentColor">00</div>
<div class="t" id="t387" style="left:466.57px;top:562.06px;font-size:15px;color:#a29c94;font-weight:400;font-family:'Liberation Mono',sans-serif;letter-spacing:1.29px;-webkit-text-stroke:0.3px currentColor">00</div>
<div class="t" id="t388" style="left:497.44px;top:562.06px;font-size:15px;color:#2c2c2c;font-weight:400;font-family:'Liberation Mono',sans-serif;letter-spacing:1.29px;-webkit-text-stroke:0.3px currentColor">00</div>
<div class="t" id="t389" style="left:528.31px;top:562.06px;font-size:15px;color:#a29c94;font-weight:400;font-family:'Liberation Mono',sans-serif;letter-spacing:1.29px;-webkit-text-stroke:0.3px currentColor">00</div>
<div class="t" id="t390" style="left:559.1800000000001px;top:562.06px;font-size:15px;color:#2c2c2c;font-weight:400;font-family:'Liberation Mono',sans-serif;letter-spacing:1.29px;-webkit-text-stroke:0.3px currentColor">00</div>
<div class="t" id="t391" style="left:590.05px;top:562.06px;font-size:15px;color:#a29c94;font-weight:400;font-family:'Liberation Mono',sans-serif;letter-spacing:1.29px;-webkit-text-stroke:0.3px currentColor">00</div>
<div class="t" id="t392" style="left:630.5px;top:562.06px;font-size:15px;color:#222;font-weight:400;font-family:'Liberation Mono',sans-serif;letter-spacing:1.29px;-webkit-text-stroke:0.3px currentColor">................</div>
<div class="t" id="t393" style="left:24px;top:582.70px;font-size:15px;color:#3c3cc8;font-weight:400;font-family:'Liberation Mono',sans-serif;letter-spacing:1.29px;-webkit-text-stroke:0.3px currentColor">00000140</div>
<div class="t" id="t394" style="left:127.0px;top:582.70px;font-size:15px;color:#2c2c2c;font-weight:400;font-family:'Liberation Mono',sans-serif;letter-spacing:1.29px;-webkit-text-stroke:0.3px currentColor">00</div>
<div class="t" id="t395" style="left:157.87px;top:582.70px;font-size:15px;color:#a29c94;font-weight:400;font-family:'Liberation Mono',sans-serif;letter-spacing:1.29px;-webkit-text-stroke:0.3px currentColor">00</div>
<div class="t" id="t396" style="left:188.74px;top:582.70px;font-size:15px;color:#2c2c2c;font-weight:400;font-family:'Liberation Mono',sans-serif;letter-spacing:1.29px;-webkit-text-stroke:0.3px currentColor">00</div>
<div class="t" id="t397" style="left:219.61px;top:582.70px;font-size:15px;color:#a29c94;font-weight:400;font-family:'Liberation Mono',sans-serif;letter-spacing:1.29px;-webkit-text-stroke:0.3px currentColor">00</div>
<div class="t" id="t398" style="left:250.48000000000002px;top:582.70px;font-size:15px;color:#2c2c2c;font-weight:400;font-family:'Liberation Mono',sans-serif;letter-spacing:1.29px;-webkit-text-stroke:0.3px currentColor">00</div>
<div class="t" id="t399" style="left:281.35px;top:582.70px;font-size:15px;color:#a29c94;font-weight:400;font-family:'Liberation Mono',sans-serif;letter-spacing:1.29px;-webkit-text-stroke:0.3px currentColor">00</div>
<div class="t" id="t400" style="left:312.22px;top:582.70px;font-size:15px;color:#2c2c2c;font-weight:400;font-family:'Liberation Mono',sans-serif;letter-spacing:1.29px;-webkit-text-stroke:0.3px currentColor">00</div>
<div class="t" id="t401" style="left:343.09000000000003px;top:582.70px;font-size:15px;color:#a29c94;font-weight:400;font-family:'Liberation Mono',sans-serif;letter-spacing:1.29px;-webkit-text-stroke:0.3px currentColor">00</div>
<div class="t" id="t402" style="left:373.96000000000004px;top:582.70px;font-size:15px;color:#2c2c2c;font-weight:400;font-family:'Liberation Mono',sans-serif;letter-spacing:1.29px;-webkit-text-stroke:0.3px currentColor">00</div>
<div class="t" id="t403" style="left:404.83px;top:582.70px;font-size:15px;color:#a29c94;font-weight:400;font-family:'Liberation Mono',sans-serif;letter-spacing:1.29px;-webkit-text-stroke:0.3px currentColor">00</div>
<div class="t" id="t404" style="left:435.7px;top:582.70px;font-size:15px;color:#2c2c2c;font-weight:400;font-family:'Liberation Mono',sans-serif;letter-spacing:1.29px;-webkit-text-stroke:0.3px currentColor">00</div>
<div class="t" id="t405" style="left:466.57px;top:582.70px;font-size:15px;color:#a29c94;font-weight:400;font-family:'Liberation Mono',sans-serif;letter-spacing:1.29px;-webkit-text-stroke:0.3px currentColor">00</div>
<div class="t" id="t406" style="left:497.44px;top:582.70px;font-size:15px;color:#2c2c2c;font-weight:400;font-family:'Liberation Mono',sans-serif;letter-spacing:1.29px;-webkit-text-stroke:0.3px currentColor">00</div>
<div class="t" id="t407" style="left:528.31px;top:582.70px;font-size:15px;color:#a29c94;font-weight:400;font-family:'Liberation Mono',sans-serif;letter-spacing:1.29px;-webkit-text-stroke:0.3px currentColor">00</div>
<div class="t" id="t408" style="left:559.1800000000001px;top:582.70px;font-size:15px;color:#2c2c2c;font-weight:400;font-family:'Liberation Mono',sans-serif;letter-spacing:1.29px;-webkit-text-stroke:0.3px currentColor">00</div>
<div class="t" id="t409" style="left:590.05px;top:582.70px;font-size:15px;color:#a29c94;font-weight:400;font-family:'Liberation Mono',sans-serif;letter-spacing:1.29px;-webkit-text-stroke:0.3px currentColor">00</div>
<div class="t" id="t410" style="left:630.5px;top:582.70px;font-size:15px;color:#222;font-weight:400;font-family:'Liberation Mono',sans-serif;letter-spacing:1.29px;-webkit-text-stroke:0.3px currentColor">................</div>
<div class="t" id="t411" style="left:24px;top:603.34px;font-size:15px;color:#3c3cc8;font-weight:400;font-family:'Liberation Mono',sans-serif;letter-spacing:1.29px;-webkit-text-stroke:0.3px currentColor">00000150</div>
<div class="t" id="t412" style="left:127.0px;top:603.34px;font-size:15px;color:#2c2c2c;font-weight:400;font-family:'Liberation Mono',sans-serif;letter-spacing:1.29px;-webkit-text-stroke:0.3px currentColor">00</div>
<div class="t" id="t413" style="left:157.87px;top:603.34px;font-size:15px;color:#a29c94;font-weight:400;font-family:'Liberation Mono',sans-serif;letter-spacing:1.29px;-webkit-text-stroke:0.3px currentColor">00</div>
<div class="t" id="t414" style="left:188.74px;top:603.34px;font-size:15px;color:#2c2c2c;font-weight:400;font-family:'Liberation Mono',sans-serif;letter-spacing:1.29px;-webkit-text-stroke:0.3px currentColor">00</div>
<div class="t" id="t415" style="left:219.61px;top:603.34px;font-size:15px;color:#a29c94;font-weight:400;font-family:'Liberation Mono',sans-serif;letter-spacing:1.29px;-webkit-text-stroke:0.3px currentColor">00</div>
<div class="t" id="t416" style="left:250.48000000000002px;top:603.34px;font-size:15px;color:#2c2c2c;font-weight:400;font-family:'Liberation Mono',sans-serif;letter-spacing:1.29px;-webkit-text-stroke:0.3px currentColor">00</div>
<div class="t" id="t417" style="left:281.35px;top:603.34px;font-size:15px;color:#a29c94;font-weight:400;font-family:'Liberation Mono',sans-serif;letter-spacing:1.29px;-webkit-text-stroke:0.3px currentColor">00</div>
<div class="t" id="t418" style="left:312.22px;top:603.34px;font-size:15px;color:#2c2c2c;font-weight:400;font-family:'Liberation Mono',sans-serif;letter-spacing:1.29px;-webkit-text-stroke:0.3px currentColor">00</div>
<div class="t" id="t419" style="left:343.09000000000003px;top:603.34px;font-size:15px;color:#a29c94;font-weight:400;font-family:'Liberation Mono',sans-serif;letter-spacing:1.29px;-webkit-text-stroke:0.3px currentColor">00</div>
<div class="t" id="t420" style="left:373.96000000000004px;top:603.34px;font-size:15px;color:#2c2c2c;font-weight:400;font-family:'Liberation Mono',sans-serif;letter-spacing:1.29px;-webkit-text-stroke:0.3px currentColor">00</div>
<div class="t" id="t421" style="left:404.83px;top:603.34px;font-size:15px;color:#a29c94;font-weight:400;font-family:'Liberation Mono',sans-serif;letter-spacing:1.29px;-webkit-text-stroke:0.3px currentColor">00</div>
<div class="t" id="t422" style="left:435.7px;top:603.34px;font-size:15px;color:#2c2c2c;font-weight:400;font-family:'Liberation Mono',sans-serif;letter-spacing:1.29px;-webkit-text-stroke:0.3px currentColor">00</div>
<div class="t" id="t423" style="left:466.57px;top:603.34px;font-size:15px;color:#a29c94;font-weight:400;font-family:'Liberation Mono',sans-serif;letter-spacing:1.29px;-webkit-text-stroke:0.3px currentColor">00</div>
<div class="t" id="t424" style="left:497.44px;top:603.34px;font-size:15px;color:#2c2c2c;font-weight:400;font-family:'Liberation Mono',sans-serif;letter-spacing:1.29px;-webkit-text-stroke:0.3px currentColor">00</div>
<div class="t" id="t425" style="left:528.31px;top:603.34px;font-size:15px;color:#a29c94;font-weight:400;font-family:'Liberation Mono',sans-serif;letter-spacing:1.29px;-webkit-text-stroke:0.3px currentColor">00</div>
<div class="t" id="t426" style="left:559.1800000000001px;top:603.34px;font-size:15px;color:#2c2c2c;font-weight:400;font-family:'Liberation Mono',sans-serif;letter-spacing:1.29px;-webkit-text-stroke:0.3px currentColor">00</div>
<div class="t" id="t427" style="left:590.05px;top:603.34px;font-size:15px;color:#a29c94;font-weight:400;font-family:'Liberation Mono',sans-serif;letter-spacing:1.29px;-webkit-text-stroke:0.3px currentColor">00</div>
<div class="t" id="t428" style="left:630.5px;top:603.34px;font-size:15px;color:#222;font-weight:400;font-family:'Liberation Mono',sans-serif;letter-spacing:1.29px;-webkit-text-stroke:0.3px currentColor">................</div>
<div class="t" id="t429" style="left:24px;top:623.98px;font-size:15px;color:#3c3cc8;font-weight:400;font-family:'Liberation Mono',sans-serif;letter-spacing:1.29px;-webkit-text-stroke:0.3px currentColor">00000160</div>
<div class="t" id="t430" style="left:127.0px;top:623.98px;font-size:15px;color:#2c2c2c;font-weight:400;font-family:'Liberation Mono',sans-serif;letter-spacing:1.29px;-webkit-text-stroke:0.3px currentColor">00</div>
<div class="t" id="t431" style="left:157.87px;top:623.98px;font-size:15px;color:#a29c94;font-weight:400;font-family:'Liberation Mono',sans-serif;letter-spacing:1.29px;-webkit-text-stroke:0.3px currentColor">00</div>
<div class="t" id="t432" style="left:188.74px;top:623.98px;font-size:15px;color:#2c2c2c;font-weight:400;font-family:'Liberation Mono',sans-serif;letter-spacing:1.29px;-webkit-text-stroke:0.3px currentColor">00</div>
<div class="t" id="t433" style="left:219.61px;top:623.98px;font-size:15px;color:#a29c94;font-weight:400;font-family:'Liberation Mono',sans-serif;letter-spacing:1.29px;-webkit-text-stroke:0.3px currentColor">00</div>
<div class="t" id="t434" style="left:250.48000000000002px;top:623.98px;font-size:15px;color:#2c2c2c;font-weight:400;font-family:'Liberation Mono',sans-serif;letter-spacing:1.29px;-webkit-text-stroke:0.3px currentColor">00</div>
<div class="t" id="t435" style="left:281.35px;top:623.98px;font-size:15px;color:#a29c94;font-weight:400;font-family:'Liberation Mono',sans-serif;letter-spacing:1.29px;-webkit-text-stroke:0.3px currentColor">00</div>
<div class="t" id="t436" style="left:312.22px;top:623.98px;font-size:15px;color:#2c2c2c;font-weight:400;font-family:'Liberation Mono',sans-serif;letter-spacing:1.29px;-webkit-text-stroke:0.3px currentColor">00</div>
<div class="t" id="t437" style="left:343.09000000000003px;top:623.98px;font-size:15px;color:#a29c94;font-weight:400;font-family:'Liberation Mono',sans-serif;letter-spacing:1.29px;-webkit-text-stroke:0.3px currentColor">00</div>
<div class="t" id="t438" style="left:373.96000000000004px;top:623.98px;font-size:15px;color:#2c2c2c;font-weight:400;font-family:'Liberation Mono',sans-serif;letter-spacing:1.29px;-webkit-text-stroke:0.3px currentColor">00</div>
<div class="t" id="t439" style="left:404.83px;top:623.98px;font-size:15px;color:#a29c94;font-weight:400;font-family:'Liberation Mono',sans-serif;letter-spacing:1.29px;-webkit-text-stroke:0.3px currentColor">00</div>
<div class="t" id="t440" style="left:435.7px;top:623.98px;font-size:15px;color:#2c2c2c;font-weight:400;font-family:'Liberation Mono',sans-serif;letter-spacing:1.29px;-webkit-text-stroke:0.3px currentColor">00</div>
<div class="t" id="t441" style="left:466.57px;top:623.98px;font-size:15px;color:#a29c94;font-weight:400;font-family:'Liberation Mono',sans-serif;letter-spacing:1.29px;-webkit-text-stroke:0.3px currentColor">00</div>
<div class="t" id="t442" style="left:497.44px;top:623.98px;font-size:15px;color:#2c2c2c;font-weight:400;font-family:'Liberation Mono',sans-serif;letter-spacing:1.29px;-webkit-text-stroke:0.3px currentColor">00</div>
<div class="t" id="t443" style="left:528.31px;top:623.98px;font-size:15px;color:#a29c94;font-weight:400;font-family:'Liberation Mono',sans-serif;letter-spacing:1.29px;-webkit-text-stroke:0.3px currentColor">00</div>
<div class="t" id="t444" style="left:559.1800000000001px;top:623.98px;font-size:15px;color:#2c2c2c;font-weight:400;font-family:'Liberation Mono',sans-serif;letter-spacing:1.29px;-webkit-text-stroke:0.3px currentColor">00</div>
<div class="t" id="t445" style="left:590.05px;top:623.98px;font-size:15px;color:#a29c94;font-weight:400;font-family:'Liberation Mono',sans-serif;letter-spacing:1.29px;-webkit-text-stroke:0.3px currentColor">00</div>
<div class="t" id="t446" style="left:630.5px;top:623.98px;font-size:15px;color:#222;font-weight:400;font-family:'Liberation Mono',sans-serif;letter-spacing:1.29px;-webkit-text-stroke:0.3px currentColor">................</div>
<div class="t" id="t447" style="left:24px;top:644.62px;font-size:15px;color:#3c3cc8;font-weight:400;font-family:'Liberation Mono',sans-serif;letter-spacing:1.29px;-webkit-text-stroke:0.3px currentColor">00000170</div>
<div class="t" id="t448" style="left:127.0px;top:644.62px;font-size:15px;color:#2c2c2c;font-weight:400;font-family:'Liberation Mono',sans-serif;letter-spacing:1.29px;-webkit-text-stroke:0.3px currentColor">00</div>
<div class="t" id="t449" style="left:157.87px;top:644.62px;font-size:15px;color:#a29c94;font-weight:400;font-family:'Liberation Mono',sans-serif;letter-spacing:1.29px;-webkit-text-stroke:0.3px currentColor">00</div>
<div class="t" id="t450" style="left:188.74px;top:644.62px;font-size:15px;color:#2c2c2c;font-weight:400;font-family:'Liberation Mono',sans-serif;letter-spacing:1.29px;-webkit-text-stroke:0.3px currentColor">00</div>
<div class="t" id="t451" style="left:219.61px;top:644.62px;font-size:15px;color:#a29c94;font-weight:400;font-family:'Liberation Mono',sans-serif;letter-spacing:1.29px;-webkit-text-stroke:0.3px currentColor">00</div>
<div class="t" id="t452" style="left:250.48000000000002px;top:644.62px;font-size:15px;color:#2c2c2c;font-weight:400;font-family:'Liberation Mono',sans-serif;letter-spacing:1.29px;-webkit-text-stroke:0.3px currentColor">00</div>
<div class="t" id="t453" style="left:281.35px;top:644.62px;font-size:15px;color:#a29c94;font-weight:400;font-family:'Liberation Mono',sans-serif;letter-spacing:1.29px;-webkit-text-stroke:0.3px currentColor">00</div>
<div class="t" id="t454" style="left:312.22px;top:644.62px;font-size:15px;color:#2c2c2c;font-weight:400;font-family:'Liberation Mono',sans-serif;letter-spacing:1.29px;-webkit-text-stroke:0.3px currentColor">00</div>
<div class="t" id="t455" style="left:343.09000000000003px;top:644.62px;font-size:15px;color:#a29c94;font-weight:400;font-family:'Liberation Mono',sans-serif;letter-spacing:1.29px;-webkit-text-stroke:0.3px currentColor">00</div>
<div class="t" id="t456" style="left:373.96000000000004px;top:644.62px;font-size:15px;color:#2c2c2c;font-weight:400;font-family:'Liberation Mono',sans-serif;letter-spacing:1.29px;-webkit-text-stroke:0.3px currentColor">00</div>
<div class="t" id="t457" style="left:404.83px;top:644.62px;font-size:15px;color:#a29c94;font-weight:400;font-family:'Liberation Mono',sans-serif;letter-spacing:1.29px;-webkit-text-stroke:0.3px currentColor">00</div>
<div class="t" id="t458" style="left:435.7px;top:644.62px;font-size:15px;color:#2c2c2c;font-weight:400;font-family:'Liberation Mono',sans-serif;letter-spacing:1.29px;-webkit-text-stroke:0.3px currentColor">00</div>
<div class="t" id="t459" style="left:466.57px;top:644.62px;font-size:15px;color:#a29c94;font-weight:400;font-family:'Liberation Mono',sans-serif;letter-spacing:1.29px;-webkit-text-stroke:0.3px currentColor">00</div>
<div class="t" id="t460" style="left:497.44px;top:644.62px;font-size:15px;color:#2c2c2c;font-weight:400;font-family:'Liberation Mono',sans-serif;letter-spacing:1.29px;-webkit-text-stroke:0.3px currentColor">00</div>
<div class="t" id="t461" style="left:528.31px;top:644.62px;font-size:15px;color:#a29c94;font-weight:400;font-family:'Liberation Mono',sans-serif;letter-spacing:1.29px;-webkit-text-stroke:0.3px currentColor">00</div>
<div class="t" id="t462" style="left:559.1800000000001px;top:644.62px;font-size:15px;color:#2c2c2c;font-weight:400;font-family:'Liberation Mono',sans-serif;letter-spacing:1.29px;-webkit-text-stroke:0.3px currentColor">00</div>
<div class="t" id="t463" style="left:590.05px;top:644.62px;font-size:15px;color:#a29c94;font-weight:400;font-family:'Liberation Mono',sans-serif;letter-spacing:1.29px;-webkit-text-stroke:0.3px currentColor">00</div>
<div class="t" id="t464" style="left:630.5px;top:644.62px;font-size:15px;color:#222;font-weight:400;font-family:'Liberation Mono',sans-serif;letter-spacing:1.29px;-webkit-text-stroke:0.3px currentColor">................</div>
<div class="t" id="t465" style="left:24px;top:665.26px;font-size:15px;color:#3c3cc8;font-weight:400;font-family:'Liberation Mono',sans-serif;letter-spacing:1.29px;-webkit-text-stroke:0.3px currentColor">00000180</div>
<div class="t" id="t466" style="left:127.0px;top:665.26px;font-size:15px;color:#2c2c2c;font-weight:400;font-family:'Liberation Mono',sans-serif;letter-spacing:1.29px;-webkit-text-stroke:0.3px currentColor">00</div>
<div class="t" id="t467" style="left:157.87px;top:665.26px;font-size:15px;color:#a29c94;font-weight:400;font-family:'Liberation Mono',sans-serif;letter-spacing:1.29px;-webkit-text-stroke:0.3px currentColor">00</div>
<div class="t" id="t468" style="left:188.74px;top:665.26px;font-size:15px;color:#2c2c2c;font-weight:400;font-family:'Liberation Mono',sans-serif;letter-spacing:1.29px;-webkit-text-stroke:0.3px currentColor">00</div>
<div class="t" id="t469" style="left:219.61px;top:665.26px;font-size:15px;color:#a29c94;font-weight:400;font-family:'Liberation Mono',sans-serif;letter-spacing:1.29px;-webkit-text-stroke:0.3px currentColor">00</div>
<div class="t" id="t470" style="left:250.48000000000002px;top:665.26px;font-size:15px;color:#2c2c2c;font-weight:400;font-family:'Liberation Mono',sans-serif;letter-spacing:1.29px;-webkit-text-stroke:0.3px currentColor">00</div>
<div class="t" id="t471" style="left:281.35px;top:665.26px;font-size:15px;color:#a29c94;font-weight:400;font-family:'Liberation Mono',sans-serif;letter-spacing:1.29px;-webkit-text-stroke:0.3px currentColor">00</div>
<div class="t" id="t472" style="left:312.22px;top:665.26px;font-size:15px;color:#2c2c2c;font-weight:400;font-family:'Liberation Mono',sans-serif;letter-spacing:1.29px;-webkit-text-stroke:0.3px currentColor">00</div>
<div class="t" id="t473" style="left:343.09000000000003px;top:665.26px;font-size:15px;color:#a29c94;font-weight:400;font-family:'Liberation Mono',sans-serif;letter-spacing:1.29px;-webkit-text-stroke:0.3px currentColor">00</div>
<div class="t" id="t474" style="left:373.96000000000004px;top:665.26px;font-size:15px;color:#2c2c2c;font-weight:400;font-family:'Liberation Mono',sans-serif;letter-spacing:1.29px;-webkit-text-stroke:0.3px currentColor">00</div>
<div class="t" id="t475" style="left:404.83px;top:665.26px;font-size:15px;color:#a29c94;font-weight:400;font-family:'Liberation Mono',sans-serif;letter-spacing:1.29px;-webkit-text-stroke:0.3px currentColor">00</div>
<div class="t" id="t476" style="left:435.7px;top:665.26px;font-size:15px;color:#2c2c2c;font-weight:400;font-family:'Liberation Mono',sans-serif;letter-spacing:1.29px;-webkit-text-stroke:0.3px currentColor">00</div>
<div class="t" id="t477" style="left:466.57px;top:665.26px;font-size:15px;color:#a29c94;font-weight:400;font-family:'Liberation Mono',sans-serif;letter-spacing:1.29px;-webkit-text-stroke:0.3px currentColor">00</div>
<div class="t" id="t478" style="left:497.44px;top:665.26px;font-size:15px;color:#2c2c2c;font-weight:400;font-family:'Liberation Mono',sans-serif;letter-spacing:1.29px;-webkit-text-stroke:0.3px currentColor">00</div>
<div class="t" id="t479" style="left:528.31px;top:665.26px;font-size:15px;color:#a29c94;font-weight:400;font-family:'Liberation Mono',sans-serif;letter-spacing:1.29px;-webkit-text-stroke:0.3px currentColor">00</div>
<div class="t" id="t480" style="left:559.1800000000001px;top:665.26px;font-size:15px;color:#2c2c2c;font-weight:400;font-family:'Liberation Mono',sans-serif;letter-spacing:1.29px;-webkit-text-stroke:0.3px currentColor">00</div>
<div class="t" id="t481" style="left:590.05px;top:665.26px;font-size:15px;color:#a29c94;font-weight:400;font-family:'Liberation Mono',sans-serif;letter-spacing:1.29px;-webkit-text-stroke:0.3px currentColor">00</div>
<div class="t" id="t482" style="left:630.5px;top:665.26px;font-size:15px;color:#222;font-weight:400;font-family:'Liberation Mono',sans-serif;letter-spacing:1.29px;-webkit-text-stroke:0.3px currentColor">................</div>
<div class="t" id="t483" style="left:24px;top:685.90px;font-size:15px;color:#3c3cc8;font-weight:400;font-family:'Liberation Mono',sans-serif;letter-spacing:1.29px;-webkit-text-stroke:0.3px currentColor">00000190</div>
<div class="t" id="t484" style="left:127.0px;top:685.90px;font-size:15px;color:#2c2c2c;font-weight:400;font-family:'Liberation Mono',sans-serif;letter-spacing:1.29px;-webkit-text-stroke:0.3px currentColor">00</div>
<div class="t" id="t485" style="left:157.87px;top:685.90px;font-size:15px;color:#a29c94;font-weight:400;font-family:'Liberation Mono',sans-serif;letter-spacing:1.29px;-webkit-text-stroke:0.3px currentColor">00</div>
<div class="t" id="t486" style="left:188.74px;top:685.90px;font-size:15px;color:#2c2c2c;font-weight:400;font-family:'Liberation Mono',sans-serif;letter-spacing:1.29px;-webkit-text-stroke:0.3px currentColor">00</div>
<div class="t" id="t487" style="left:219.61px;top:685.90px;font-size:15px;color:#a29c94;font-weight:400;font-family:'Liberation Mono',sans-serif;letter-spacing:1.29px;-webkit-text-stroke:0.3px currentColor">00</div>
<div class="t" id="t488" style="left:250.48000000000002px;top:685.90px;font-size:15px;color:#2c2c2c;font-weight:400;font-family:'Liberation Mono',sans-serif;letter-spacing:1.29px;-webkit-text-stroke:0.3px currentColor">00</div>
<div class="t" id="t489" style="left:281.35px;top:685.90px;font-size:15px;color:#a29c94;font-weight:400;font-family:'Liberation Mono',sans-serif;letter-spacing:1.29px;-webkit-text-stroke:0.3px currentColor">00</div>
<div class="t" id="t490" style="left:312.22px;top:685.90px;font-size:15px;color:#2c2c2c;font-weight:400;font-family:'Liberation Mono',sans-serif;letter-spacing:1.29px;-webkit-text-stroke:0.3px currentColor">00</div>
<div class="t" id="t491" style="left:343.09000000000003px;top:685.90px;font-size:15px;color:#a29c94;font-weight:400;font-family:'Liberation Mono',sans-serif;letter-spacing:1.29px;-webkit-text-stroke:0.3px currentColor">00</div>
<div class="t" id="t492" style="left:373.96000000000004px;top:685.90px;font-size:15px;color:#2c2c2c;font-weight:400;font-family:'Liberation Mono',sans-serif;letter-spacing:1.29px;-webkit-text-stroke:0.3px currentColor">00</div>
<div class="t" id="t493" style="left:404.83px;top:685.90px;font-size:15px;color:#a29c94;font-weight:400;font-family:'Liberation Mono',sans-serif;letter-spacing:1.29px;-webkit-text-stroke:0.3px currentColor">00</div>
<div class="t" id="t494" style="left:435.7px;top:685.90px;font-size:15px;color:#2c2c2c;font-weight:400;font-family:'Liberation Mono',sans-serif;letter-spacing:1.29px;-webkit-text-stroke:0.3px currentColor">00</div>
<div class="t" id="t495" style="left:466.57px;top:685.90px;font-size:15px;color:#a29c94;font-weight:400;font-family:'Liberation Mono',sans-serif;letter-spacing:1.29px;-webkit-text-stroke:0.3px currentColor">00</div>
<div class="t" id="t496" style="left:497.44px;top:685.90px;font-size:15px;color:#2c2c2c;font-weight:400;font-family:'Liberation Mono',sans-serif;letter-spacing:1.29px;-webkit-text-stroke:0.3px currentColor">00</div>
<div class="t" id="t497" style="left:528.31px;top:685.90px;font-size:15px;color:#a29c94;font-weight:400;font-family:'Liberation Mono',sans-serif;letter-spacing:1.29px;-webkit-text-stroke:0.3px currentColor">00</div>
<div class="t" id="t498" style="left:559.1800000000001px;top:685.90px;font-size:15px;color:#2c2c2c;font-weight:400;font-family:'Liberation Mono',sans-serif;letter-spacing:1.29px;-webkit-text-stroke:0.3px currentColor">00</div>
<div class="t" id="t499" style="left:590.05px;top:685.90px;font-size:15px;color:#a29c94;font-weight:400;font-family:'Liberation Mono',sans-serif;letter-spacing:1.29px;-webkit-text-stroke:0.3px currentColor">00</div>
<div class="t" id="t500" style="left:630.5px;top:685.90px;font-size:15px;color:#222;font-weight:400;font-family:'Liberation Mono',sans-serif;letter-spacing:1.29px;-webkit-text-stroke:0.3px currentColor">................</div>
<div class="t" id="t501" style="left:24px;top:706.54px;font-size:15px;color:#3c3cc8;font-weight:400;font-family:'Liberation Mono',sans-serif;letter-spacing:1.29px;-webkit-text-stroke:0.3px currentColor">000001A0</div>
<div class="t" id="t502" style="left:127.0px;top:706.54px;font-size:15px;color:#2c2c2c;font-weight:400;font-family:'Liberation Mono',sans-serif;letter-spacing:1.29px;-webkit-text-stroke:0.3px currentColor">00</div>
<div class="t" id="t503" style="left:157.87px;top:706.54px;font-size:15px;color:#a29c94;font-weight:400;font-family:'Liberation Mono',sans-serif;letter-spacing:1.29px;-webkit-text-stroke:0.3px currentColor">00</div>
<div class="t" id="t504" style="left:188.74px;top:706.54px;font-size:15px;color:#2c2c2c;font-weight:400;font-family:'Liberation Mono',sans-serif;letter-spacing:1.29px;-webkit-text-stroke:0.3px currentColor">00</div>
<div class="t" id="t505" style="left:219.61px;top:706.54px;font-size:15px;color:#a29c94;font-weight:400;font-family:'Liberation Mono',sans-serif;letter-spacing:1.29px;-webkit-text-stroke:0.3px currentColor">00</div>
<div class="t" id="t506" style="left:250.48000000000002px;top:706.54px;font-size:15px;color:#2c2c2c;font-weight:400;font-family:'Liberation Mono',sans-serif;letter-spacing:1.29px;-webkit-text-stroke:0.3px currentColor">00</div>
<div class="t" id="t507" style="left:281.35px;top:706.54px;font-size:15px;color:#a29c94;font-weight:400;font-family:'Liberation Mono',sans-serif;letter-spacing:1.29px;-webkit-text-stroke:0.3px currentColor">00</div>
<div class="t" id="t508" style="left:312.22px;top:706.54px;font-size:15px;color:#2c2c2c;font-weight:400;font-family:'Liberation Mono',sans-serif;letter-spacing:1.29px;-webkit-text-stroke:0.3px currentColor">00</div>
<div class="t" id="t509" style="left:343.09000000000003px;top:706.54px;font-size:15px;color:#a29c94;font-weight:400;font-family:'Liberation Mono',sans-serif;letter-spacing:1.29px;-webkit-text-stroke:0.3px currentColor">00</div>
<div class="t" id="t510" style="left:373.96000000000004px;top:706.54px;font-size:15px;color:#2c2c2c;font-weight:400;font-family:'Liberation Mono',sans-serif;letter-spacing:1.29px;-webkit-text-stroke:0.3px currentColor">00</div>
<div class="t" id="t511" style="left:404.83px;top:706.54px;font-size:15px;color:#a29c94;font-weight:400;font-family:'Liberation Mono',sans-serif;letter-spacing:1.29px;-webkit-text-stroke:0.3px currentColor">00</div>
<div class="t" id="t512" style="left:435.7px;top:706.54px;font-size:15px;color:#2c2c2c;font-weight:400;font-family:'Liberation Mono',sans-serif;letter-spacing:1.29px;-webkit-text-stroke:0.3px currentColor">00</div>
<div class="t" id="t513" style="left:466.57px;top:706.54px;font-size:15px;color:#a29c94;font-weight:400;font-family:'Liberation Mono',sans-serif;letter-spacing:1.29px;-webkit-text-stroke:0.3px currentColor">00</div>
<div class="t" id="t514" style="left:497.44px;top:706.54px;font-size:15px;color:#2c2c2c;font-weight:400;font-family:'Liberation Mono',sans-serif;letter-spacing:1.29px;-webkit-text-stroke:0.3px currentColor">00</div>
<div class="t" id="t515" style="left:528.31px;top:706.54px;font-size:15px;color:#a29c94;font-weight:400;font-family:'Liberation Mono',sans-serif;letter-spacing:1.29px;-webkit-text-stroke:0.3px currentColor">00</div>
<div class="t" id="t516" style="left:559.1800000000001px;top:706.54px;font-size:15px;color:#2c2c2c;font-weight:400;font-family:'Liberation Mono',sans-serif;letter-spacing:1.29px;-webkit-text-stroke:0.3px currentColor">00</div>
<div class="t" id="t517" style="left:590.05px;top:706.54px;font-size:15px;color:#a29c94;font-weight:400;font-family:'Liberation Mono',sans-serif;letter-spacing:1.29px;-webkit-text-stroke:0.3px currentColor">00</div>
<div class="t" id="t518" style="left:630.5px;top:706.54px;font-size:15px;color:#222;font-weight:400;font-family:'Liberation Mono',sans-serif;letter-spacing:1.29px;-webkit-text-stroke:0.3px currentColor">................</div>
<div class="t" id="t519" style="left:24px;top:727.18px;font-size:15px;color:#3c3cc8;font-weight:400;font-family:'Liberation Mono',sans-serif;letter-spacing:1.29px;-webkit-text-stroke:0.3px currentColor">000001B0</div>
<div class="t" id="t520" style="left:127.0px;top:727.18px;font-size:15px;color:#2c2c2c;font-weight:400;font-family:'Liberation Mono',sans-serif;letter-spacing:1.29px;-webkit-text-stroke:0.3px currentColor">00</div>
<div class="t" id="t521" style="left:157.87px;top:727.18px;font-size:15px;color:#a29c94;font-weight:400;font-family:'Liberation Mono',sans-serif;letter-spacing:1.29px;-webkit-text-stroke:0.3px currentColor">00</div>
<div class="t" id="t522" style="left:188.74px;top:727.18px;font-size:15px;color:#2c2c2c;font-weight:400;font-family:'Liberation Mono',sans-serif;letter-spacing:1.29px;-webkit-text-stroke:0.3px currentColor">00</div>
<div class="t" id="t523" style="left:219.61px;top:727.18px;font-size:15px;color:#a29c94;font-weight:400;font-family:'Liberation Mono',sans-serif;letter-spacing:1.29px;-webkit-text-stroke:0.3px currentColor">00</div>
<div class="t" id="t524" style="left:250.48000000000002px;top:727.18px;font-size:15px;color:#2c2c2c;font-weight:400;font-family:'Liberation Mono',sans-serif;letter-spacing:1.29px;-webkit-text-stroke:0.3px currentColor">00</div>
<div class="t" id="t525" style="left:281.35px;top:727.18px;font-size:15px;color:#a29c94;font-weight:400;font-family:'Liberation Mono',sans-serif;letter-spacing:1.29px;-webkit-text-stroke:0.3px currentColor">00</div>
<div class="t" id="t526" style="left:312.22px;top:727.18px;font-size:15px;color:#2c2c2c;font-weight:400;font-family:'Liberation Mono',sans-serif;letter-spacing:1.29px;-webkit-text-stroke:0.3px currentColor">00</div>
<div class="t" id="t527" style="left:343.09000000000003px;top:727.18px;font-size:15px;color:#a29c94;font-weight:400;font-family:'Liberation Mono',sans-serif;letter-spacing:1.29px;-webkit-text-stroke:0.3px currentColor">00</div>
<div class="t" id="t528" style="left:373.96000000000004px;top:727.18px;font-size:15px;color:#2c2c2c;font-weight:400;font-family:'Liberation Mono',sans-serif;letter-spacing:1.29px;-webkit-text-stroke:0.3px currentColor">00</div>
<div class="t" id="t529" style="left:404.83px;top:727.18px;font-size:15px;color:#a29c94;font-weight:400;font-family:'Liberation Mono',sans-serif;letter-spacing:1.29px;-webkit-text-stroke:0.3px currentColor">00</div>
<div class="t" id="t530" style="left:435.7px;top:727.18px;font-size:15px;color:#2c2c2c;font-weight:400;font-family:'Liberation Mono',sans-serif;letter-spacing:1.29px;-webkit-text-stroke:0.3px currentColor">00</div>
<div class="t" id="t531" style="left:466.57px;top:727.18px;font-size:15px;color:#a29c94;font-weight:400;font-family:'Liberation Mono',sans-serif;letter-spacing:1.29px;-webkit-text-stroke:0.3px currentColor">00</div>
<div class="t" id="t532" style="left:497.44px;top:727.18px;font-size:15px;color:#2c2c2c;font-weight:400;font-family:'Liberation Mono',sans-serif;letter-spacing:1.29px;-webkit-text-stroke:0.3px currentColor">00</div>
<div class="t" id="t533" style="left:528.31px;top:727.18px;font-size:15px;color:#a29c94;font-weight:400;font-family:'Liberation Mono',sans-serif;letter-spacing:1.29px;-webkit-text-stroke:0.3px currentColor">00</div>
<div class="t" id="t534" style="left:559.1800000000001px;top:727.18px;font-size:15px;color:#2c2c2c;font-weight:400;font-family:'Liberation Mono',sans-serif;letter-spacing:1.29px;-webkit-text-stroke:0.3px currentColor">00</div>
<div class="t" id="t535" style="left:590.05px;top:727.18px;font-size:15px;color:#a29c94;font-weight:400;font-family:'Liberation Mono',sans-serif;letter-spacing:1.29px;-webkit-text-stroke:0.3px currentColor">00</div>
<div class="t" id="t536" style="left:630.5px;top:727.18px;font-size:15px;color:#222;font-weight:400;font-family:'Liberation Mono',sans-serif;letter-spacing:1.29px;-webkit-text-stroke:0.3px currentColor">................</div>
<div class="t" id="t537" style="left:24px;top:747.82px;font-size:15px;color:#3c3cc8;font-weight:400;font-family:'Liberation Mono',sans-serif;letter-spacing:1.29px;-webkit-text-stroke:0.3px currentColor">000001C0</div>
<div class="t" id="t538" style="left:127.0px;top:747.82px;font-size:15px;color:#2c2c2c;font-weight:400;font-family:'Liberation Mono',sans-serif;letter-spacing:1.29px;-webkit-text-stroke:0.3px currentColor">00</div>
<div class="t" id="t539" style="left:157.87px;top:747.82px;font-size:15px;color:#a29c94;font-weight:400;font-family:'Liberation Mono',sans-serif;letter-spacing:1.29px;-webkit-text-stroke:0.3px currentColor">00</div>
<div class="t" id="t540" style="left:188.74px;top:747.82px;font-size:15px;color:#2c2c2c;font-weight:400;font-family:'Liberation Mono',sans-serif;letter-spacing:1.29px;-webkit-text-stroke:0.3px currentColor">EE</div>
<div class="t" id="t541" style="left:219.61px;top:747.82px;font-size:15px;color:#a29c94;font-weight:400;font-family:'Liberation Mono',sans-serif;letter-spacing:1.29px;-webkit-text-stroke:0.3px currentColor">00</div>
<div class="t" id="t542" style="left:250.48000000000002px;top:747.82px;font-size:15px;color:#2c2c2c;font-weight:400;font-family:'Liberation Mono',sans-serif;letter-spacing:1.29px;-webkit-text-stroke:0.3px currentColor">00</div>
<div class="t" id="t543" style="left:281.35px;top:747.82px;font-size:15px;color:#a29c94;font-weight:400;font-family:'Liberation Mono',sans-serif;letter-spacing:1.29px;-webkit-text-stroke:0.3px currentColor">00</div>
<div class="t" id="t544" style="left:312.22px;top:747.82px;font-size:15px;color:#2c2c2c;font-weight:400;font-family:'Liberation Mono',sans-serif;letter-spacing:1.29px;-webkit-text-stroke:0.3px currentColor">00</div>
<div class="t" id="t545" style="left:343.09000000000003px;top:747.82px;font-size:15px;color:#a29c94;font-weight:400;font-family:'Liberation Mono',sans-serif;letter-spacing:1.29px;-webkit-text-stroke:0.3px currentColor">00</div>
<div class="t" id="t546" style="left:373.96000000000004px;top:747.82px;font-size:15px;color:#2c2c2c;font-weight:400;font-family:'Liberation Mono',sans-serif;letter-spacing:1.29px;-webkit-text-stroke:0.3px currentColor">00</div>
<div class="t" id="t547" style="left:404.83px;top:747.82px;font-size:15px;color:#a29c94;font-weight:400;font-family:'Liberation Mono',sans-serif;letter-spacing:1.29px;-webkit-text-stroke:0.3px currentColor">00</div>
<div class="t" id="t548" style="left:435.7px;top:747.82px;font-size:15px;color:#2c2c2c;font-weight:400;font-family:'Liberation Mono',sans-serif;letter-spacing:1.29px;-webkit-text-stroke:0.3px currentColor">00</div>
<div class="t" id="t549" style="left:466.57px;top:747.82px;font-size:15px;color:#a29c94;font-weight:400;font-family:'Liberation Mono',sans-serif;letter-spacing:1.29px;-webkit-text-stroke:0.3px currentColor">00</div>
<div class="t" id="t550" style="left:497.44px;top:747.82px;font-size:15px;color:#2c2c2c;font-weight:400;font-family:'Liberation Mono',sans-serif;letter-spacing:1.29px;-webkit-text-stroke:0.3px currentColor">00</div>
<div class="t" id="t551" style="left:528.31px;top:747.82px;font-size:15px;color:#a29c94;font-weight:400;font-family:'Liberation Mono',sans-serif;letter-spacing:1.29px;-webkit-text-stroke:0.3px currentColor">00</div>
<div class="t" id="t552" style="left:559.1800000000001px;top:747.82px;font-size:15px;color:#2c2c2c;font-weight:400;font-family:'Liberation Mono',sans-serif;letter-spacing:1.29px;-webkit-text-stroke:0.3px currentColor">00</div>
<div class="t" id="t553" style="left:590.05px;top:747.82px;font-size:15px;color:#a29c94;font-weight:400;font-family:'Liberation Mono',sans-serif;letter-spacing:1.29px;-webkit-text-stroke:0.3px currentColor">00</div>
<div class="t" id="t554" style="left:630.5px;top:747.82px;font-size:15px;color:#222;font-weight:400;font-family:'Liberation Mono',sans-serif;letter-spacing:1.29px;-webkit-text-stroke:0.3px currentColor">................</div>
<div class="t" id="t555" style="left:24px;top:768.46px;font-size:15px;color:#3c3cc8;font-weight:400;font-family:'Liberation Mono',sans-serif;letter-spacing:1.29px;-webkit-text-stroke:0.3px currentColor">000001D0</div>
<div class="t" id="t556" style="left:127.0px;top:768.46px;font-size:15px;color:#2c2c2c;font-weight:400;font-family:'Liberation Mono',sans-serif;letter-spacing:1.29px;-webkit-text-stroke:0.3px currentColor">00</div>
<div class="t" id="t557" style="left:157.87px;top:768.46px;font-size:15px;color:#a29c94;font-weight:400;font-family:'Liberation Mono',sans-serif;letter-spacing:1.29px;-webkit-text-stroke:0.3px currentColor">00</div>
<div class="t" id="t558" style="left:188.74px;top:768.46px;font-size:15px;color:#2c2c2c;font-weight:400;font-family:'Liberation Mono',sans-serif;letter-spacing:1.29px;-webkit-text-stroke:0.3px currentColor">00</div>
<div class="t" id="t559" style="left:219.61px;top:768.46px;font-size:15px;color:#a29c94;font-weight:400;font-family:'Liberation Mono',sans-serif;letter-spacing:1.29px;-webkit-text-stroke:0.3px currentColor">00</div>
<div class="t" id="t560" style="left:250.48000000000002px;top:768.46px;font-size:15px;color:#2c2c2c;font-weight:400;font-family:'Liberation Mono',sans-serif;letter-spacing:1.29px;-webkit-text-stroke:0.3px currentColor">00</div>
<div class="t" id="t561" style="left:281.35px;top:768.46px;font-size:15px;color:#a29c94;font-weight:400;font-family:'Liberation Mono',sans-serif;letter-spacing:1.29px;-webkit-text-stroke:0.3px currentColor">00</div>
<div class="t" id="t562" style="left:312.22px;top:768.46px;font-size:15px;color:#2c2c2c;font-weight:400;font-family:'Liberation Mono',sans-serif;letter-spacing:1.29px;-webkit-text-stroke:0.3px currentColor">00</div>
<div class="t" id="t563" style="left:343.09000000000003px;top:768.46px;font-size:15px;color:#a29c94;font-weight:400;font-family:'Liberation Mono',sans-serif;letter-spacing:1.29px;-webkit-text-stroke:0.3px currentColor">00</div>
<div class="t" id="t564" style="left:373.96000000000004px;top:768.46px;font-size:15px;color:#2c2c2c;font-weight:400;font-family:'Liberation Mono',sans-serif;letter-spacing:1.29px;-webkit-text-stroke:0.3px currentColor">00</div>
<div class="t" id="t565" style="left:404.83px;top:768.46px;font-size:15px;color:#a29c94;font-weight:400;font-family:'Liberation Mono',sans-serif;letter-spacing:1.29px;-webkit-text-stroke:0.3px currentColor">00</div>
<div class="t" id="t566" style="left:435.7px;top:768.46px;font-size:15px;color:#2c2c2c;font-weight:400;font-family:'Liberation Mono',sans-serif;letter-spacing:1.29px;-webkit-text-stroke:0.3px currentColor">00</div>
<div class="t" id="t567" style="left:466.57px;top:768.46px;font-size:15px;color:#a29c94;font-weight:400;font-family:'Liberation Mono',sans-serif;letter-spacing:1.29px;-webkit-text-stroke:0.3px currentColor">00</div>
<div class="t" id="t568" style="left:497.44px;top:768.46px;font-size:15px;color:#2c2c2c;font-weight:400;font-family:'Liberation Mono',sans-serif;letter-spacing:1.29px;-webkit-text-stroke:0.3px currentColor">00</div>
<div class="t" id="t569" style="left:528.31px;top:768.46px;font-size:15px;color:#a29c94;font-weight:400;font-family:'Liberation Mono',sans-serif;letter-spacing:1.29px;-webkit-text-stroke:0.3px currentColor">00</div>
<div class="t" id="t570" style="left:559.1800000000001px;top:768.46px;font-size:15px;color:#2c2c2c;font-weight:400;font-family:'Liberation Mono',sans-serif;letter-spacing:1.29px;-webkit-text-stroke:0.3px currentColor">00</div>
<div class="t" id="t571" style="left:590.05px;top:768.46px;font-size:15px;color:#a29c94;font-weight:400;font-family:'Liberation Mono',sans-serif;letter-spacing:1.29px;-webkit-text-stroke:0.3px currentColor">00</div>
<div class="t" id="t572" style="left:630.5px;top:768.46px;font-size:15px;color:#222;font-weight:400;font-family:'Liberation Mono',sans-serif;letter-spacing:1.29px;-webkit-text-stroke:0.3px currentColor">................</div>
<div class="t" id="t573" style="left:24px;top:789.10px;font-size:15px;color:#3c3cc8;font-weight:400;font-family:'Liberation Mono',sans-serif;letter-spacing:1.29px;-webkit-text-stroke:0.3px currentColor">000001E0</div>
<div class="t" id="t574" style="left:127.0px;top:789.10px;font-size:15px;color:#2c2c2c;font-weight:400;font-family:'Liberation Mono',sans-serif;letter-spacing:1.29px;-webkit-text-stroke:0.3px currentColor">00</div>
<div class="t" id="t575" style="left:157.87px;top:789.10px;font-size:15px;color:#a29c94;font-weight:400;font-family:'Liberation Mono',sans-serif;letter-spacing:1.29px;-webkit-text-stroke:0.3px currentColor">00</div>
<div class="t" id="t576" style="left:188.74px;top:789.10px;font-size:15px;color:#2c2c2c;font-weight:400;font-family:'Liberation Mono',sans-serif;letter-spacing:1.29px;-webkit-text-stroke:0.3px currentColor">00</div>
<div class="t" id="t577" style="left:219.61px;top:789.10px;font-size:15px;color:#a29c94;font-weight:400;font-family:'Liberation Mono',sans-serif;letter-spacing:1.29px;-webkit-text-stroke:0.3px currentColor">00</div>
<div class="t" id="t578" style="left:250.48000000000002px;top:789.10px;font-size:15px;color:#2c2c2c;font-weight:400;font-family:'Liberation Mono',sans-serif;letter-spacing:1.29px;-webkit-text-stroke:0.3px currentColor">00</div>
<div class="t" id="t579" style="left:281.35px;top:789.10px;font-size:15px;color:#a29c94;font-weight:400;font-family:'Liberation Mono',sans-serif;letter-spacing:1.29px;-webkit-text-stroke:0.3px currentColor">00</div>
<div class="t" id="t580" style="left:312.22px;top:789.10px;font-size:15px;color:#2c2c2c;font-weight:400;font-family:'Liberation Mono',sans-serif;letter-spacing:1.29px;-webkit-text-stroke:0.3px currentColor">00</div>
<div class="t" id="t581" style="left:343.09000000000003px;top:789.10px;font-size:15px;color:#a29c94;font-weight:400;font-family:'Liberation Mono',sans-serif;letter-spacing:1.29px;-webkit-text-stroke:0.3px currentColor">00</div>
<div class="t" id="t582" style="left:373.96000000000004px;top:789.10px;font-size:15px;color:#2c2c2c;font-weight:400;font-family:'Liberation Mono',sans-serif;letter-spacing:1.29px;-webkit-text-stroke:0.3px currentColor">00</div>
<div class="t" id="t583" style="left:404.83px;top:789.10px;font-size:15px;color:#a29c94;font-weight:400;font-family:'Liberation Mono',sans-serif;letter-spacing:1.29px;-webkit-text-stroke:0.3px currentColor">00</div>
<div class="t" id="t584" style="left:435.7px;top:789.10px;font-size:15px;color:#2c2c2c;font-weight:400;font-family:'Liberation Mono',sans-serif;letter-spacing:1.29px;-webkit-text-stroke:0.3px currentColor">00</div>
<div class="t" id="t585" style="left:466.57px;top:789.10px;font-size:15px;color:#a29c94;font-weight:400;font-family:'Liberation Mono',sans-serif;letter-spacing:1.29px;-webkit-text-stroke:0.3px currentColor">00</div>
<div class="t" id="t586" style="left:497.44px;top:789.10px;font-size:15px;color:#2c2c2c;font-weight:400;font-family:'Liberation Mono',sans-serif;letter-spacing:1.29px;-webkit-text-stroke:0.3px currentColor">00</div>
<div class="t" id="t587" style="left:528.31px;top:789.10px;font-size:15px;color:#a29c94;font-weight:400;font-family:'Liberation Mono',sans-serif;letter-spacing:1.29px;-webkit-text-stroke:0.3px currentColor">00</div>
<div class="t" id="t588" style="left:559.1800000000001px;top:789.10px;font-size:15px;color:#2c2c2c;font-weight:400;font-family:'Liberation Mono',sans-serif;letter-spacing:1.29px;-webkit-text-stroke:0.3px currentColor">00</div>
<div class="t" id="t589" style="left:590.05px;top:789.10px;font-size:15px;color:#a29c94;font-weight:400;font-family:'Liberation Mono',sans-serif;letter-spacing:1.29px;-webkit-text-stroke:0.3px currentColor">00</div>
<div class="t" id="t590" style="left:630.5px;top:789.10px;font-size:15px;color:#222;font-weight:400;font-family:'Liberation Mono',sans-serif;letter-spacing:1.29px;-webkit-text-stroke:0.3px currentColor">................</div>
<div style="position:absolute;left:204px;top:195px;width:935px;height:620px;background:#f0f0f0;border:1px solid #8a8a8a;box-sizing:border-box;box-shadow:0 1px 16px 1px rgba(0,0,0,0.2)"></div>
<div style="position:absolute;left:205px;top:196px;width:933px;height:38px;background:#fff"></div>
<svg style="position:absolute;left:218px;top:206px" width="14" height="17"><rect x="0.5" y="0.5" width="13" height="16" rx="1.5" fill="#333"/><rect x="1.5" y="2" width="11" height="12" fill="#6cc23a"/><rect x="1.5" y="8" width="11" height="6" fill="#4a9a2a"/><rect x="3" y="3" width="8" height="3" fill="#c8e8a0"/></svg>
<div class="t" id="t591" style="transform:scaleX(0.9583);left:239.5px;top:206.74px;font-size:15.5px;color:#1a1a1a;font-weight:400;font-family:'Liberation Sans',sans-serif;">Smart Phone Flash Tool(Runtime Trace Mode)</div>
<div style="position:absolute;left:982px;top:214px;width:14px;height:1px;background:#333"></div>
<div style="position:absolute;left:1041px;top:207px;width:14px;height:14px;border:1px solid #333;box-sizing:border-box"></div>
<svg style="position:absolute;left:1101px;top:207px" width="15" height="15"><path d="M0.5 0.5 L14.5 14.5 M14.5 0.5 L0.5 14.5" stroke="#333" stroke-width="1.1"/></svg>
<div style="position:absolute;left:205px;top:260px;width:934px;height:1px;background:#d9d9d9"></div>
<div class="t" id="t592" style="transform:scaleX(0.9086);left:212.3px;top:239.24px;font-size:15.5px;color:#1a1a1a;font-weight:400;font-family:'Liberation Sans',sans-serif;">File</div>
<div class="t" id="t593" style="transform:scaleX(1.0370);left:248.6px;top:239.24px;font-size:15.5px;color:#1a1a1a;font-weight:400;font-family:'Liberation Sans',sans-serif;">Options</div>
<div class="t" id="t594" style="transform:scaleX(1.0247);left:318.5px;top:239.24px;font-size:15.5px;color:#1a1a1a;font-weight:400;font-family:'Liberation Sans',sans-serif;">Window</div>
<div class="t" id="t595" style="transform:scaleX(0.9846);left:389.6px;top:239.24px;font-size:15.5px;color:#1a1a1a;font-weight:400;font-family:'Liberation Sans',sans-serif;">Help</div>
<svg style="position:absolute;left:212px;top:278px" width="176" height="320" viewBox="0 0 176 320">
<defs>
<linearGradient id="sh" x1="0" y1="0" x2="0" y2="1"><stop offset="0.2" stop-color="#000" stop-opacity="0.07"/><stop offset="1" stop-color="#000" stop-opacity="0"/></linearGradient>
<filter id="bl" x="-10%" y="-30%" width="120%" height="160%"><feGaussianBlur stdDeviation="2.5"/></filter><clipPath id="pc"><rect x="4" y="4" width="167" height="279" rx="20"/></clipPath>
</defs>
<rect x="6" y="276" width="163" height="40" rx="18" fill="url(#sh)" filter="url(#bl)"/>
<rect x="4" y="4" width="167" height="279" rx="20" fill="#0d0d0d"/>
<path d="M0 0 H88 L80 44 H0 Z" fill="#4a494b" clip-path="url(#pc)"/>
<rect x="72" y="27" width="31" height="2" fill="#5a5a5a"/>
<text x="12" y="41.5" font-family="Liberation Serif" font-size="8.5" fill="#6a6a6a">BM</text>
<rect x="9" y="44" width="156" height="203" fill="#000"/>
<rect x="9" y="246" width="156" height="1" fill="#2a2a2a"/>
<text x="88" y="166" text-anchor="middle" font-family="Liberation Sans" font-weight="bold" font-size="25.5" fill="#e8942a" textLength="115.7" lengthAdjust="spacingAndGlyphs">MT6765</text>
<rect x="29.5" y="260" width="16" height="7" rx="1.5" fill="none" stroke="#4a4a4a" stroke-width="1.6"/>
<path d="M30 263.5 H45" stroke="#4a4a4a" stroke-width="1.4"/>
<rect x="75" y="256" width="27" height="12" rx="4" fill="#050505" stroke="#222" stroke-width="1.2"/>
<path d="M133 261 H143 Q146.5 261 146.5 264.5 Q146.5 268 143 268 H134" stroke="#4a4a4a" fill="none" stroke-width="1.6"/>
<path d="M129 261 L135 257.5 V264.5 Z" fill="#4a4a4a"/>
</svg>
<div style="position:absolute;left:391px;top:295px;width:735px;height:430px;background:#fff;border:1px solid #dedede;box-sizing:border-box"></div>
<div style="position:absolute;left:391px;top:295px;width:738px;height:1px;background:#a8a8a8"></div>
<div style="position:absolute;left:393px;top:273px;width:86px;height:23px;background:#f0f0f0;border:1px solid #d9d9d9;border-bottom:none;box-sizing:border-box"></div>
<div style="position:absolute;left:478px;top:273px;width:77px;height:23px;background:#f0f0f0;border:1px solid #d9d9d9;border-bottom:none;box-sizing:border-box"></div>
<div style="position:absolute;left:651px;top:273px;width:91px;height:23px;background:#f0f0f0;border:1px solid #d9d9d9;border-bottom:none;box-sizing:border-box"></div>
<div style="position:absolute;left:741px;top:273px;width:112px;height:23px;background:#f0f0f0;border:1px solid #d9d9d9;border-bottom:none;box-sizing:border-box"></div>
<div style="position:absolute;left:554px;top:272px;width:98px;height:25px;background:#fff;border:1px solid #d9d9d9;border-bottom:none;box-sizing:border-box"></div>
<div style="position:absolute;left:555px;top:294px;width:96px;height:3px;background:#fff"></div>
<div class="t" id="t596" style="transform:scaleX(0.9237);left:406.5px;top:276.20px;font-size:15px;color:#1a1a1a;font-weight:400;font-family:'Liberation Sans',sans-serif;">Welcome</div>
<div class="t" id="t597" style="transform:scaleX(0.9471);left:494.5px;top:276.20px;font-size:15px;color:#1a1a1a;font-weight:400;font-family:'Liberation Sans',sans-serif;">Format</div>
<div class="t" id="t598" style="transform:scaleX(0.9593);left:570.5px;top:275.20px;font-size:15px;color:#1a1a1a;font-weight:400;font-family:'Liberation Sans',sans-serif;">Download</div>
<div class="t" id="t599" style="transform:scaleX(0.9253);left:665.5px;top:276.20px;font-size:15px;color:#1a1a1a;font-weight:400;font-family:'Liberation Sans',sans-serif;">Readback</div>
<div class="t" id="t600" style="transform:scaleX(0.9523);left:758px;top:276.20px;font-size:15px;color:#1a1a1a;font-weight:400;font-family:'Liberation Sans',sans-serif;">Memory Test</div>
<div style="position:absolute;left:402px;top:354px;width:714px;height:1px;background:#b4b4b4"></div>
<div style="position:absolute;left:1115px;top:307px;width:1px;height:48px;background:#b4b4b4"></div>
<svg style="position:absolute;left:441px;top:313px" width="18" height="18"><rect x="5" y="1" width="8" height="5" fill="#a8dc38"/><rect x="5" y="6" width="8" height="3" fill="#88c020"/><path d="M1 8.5 H17 L9 17 Z" fill="#80bc1c"/></svg>
<div class="t" id="t601" style="transform:scaleX(0.9518);left:418.5px;top:334.20px;font-size:15px;color:#1a1a1a;font-weight:400;font-family:'Liberation Sans',sans-serif;">Download</div>
<svg style="position:absolute;left:536px;top:313px" width="16" height="16"><circle cx="8" cy="8" r="6.5" fill="#d8d8d8" stroke="#c4c4c4" stroke-width="2"/><rect x="5" y="5.5" width="6" height="5" fill="#fff"/></svg>
<div class="t" id="t602" style="transform:scaleX(0.9235);left:529.5px;top:333.70px;font-size:15px;color:#9a9a9a;font-weight:400;font-family:'Liberation Sans',sans-serif;">Stop</div>
<div style="position:absolute;left:402px;top:363px;width:714px;height:350px;border:1px solid #dcdcdc;box-sizing:border-box"></div>
<div class="t" id="t603" style="transform:scaleX(0.9467);left:414.5px;top:381.00px;font-size:15px;color:#1a1a1a;font-weight:400;font-family:'Liberation Sans',sans-serif;">Download-Agent</div>
<div class="t" id="t604" style="transform:scaleX(0.9402);left:414.2px;top:418.40px;font-size:15px;color:#1a1a1a;font-weight:400;font-family:'Liberation Sans',sans-serif;">Scatter-loading File</div>
<div class="t" id="t605" style="transform:scaleX(0.9602);left:414.2px;top:455.00px;font-size:15px;color:#1a1a1a;font-weight:400;font-family:'Liberation Sans',sans-serif;">Authentication File</div>
<div style="position:absolute;left:545px;top:380px;width:456px;height:23px;background:#fff;border:1px solid #a8a8a8;box-sizing:border-box"></div>
<div class="t" id="t606" style="transform:scaleX(0.9435);left:548px;top:383.70px;font-size:15px;color:#1a1a1a;font-weight:400;font-family:'Liberation Sans',sans-serif;">D:\SP_Flash_Tool_v5.2104_Win\\MTK_AllInOne_DA.bin</div>
<div style="position:absolute;left:545px;top:415px;width:456px;height:23px;background:#fff;border:1px solid #a8a8a8;box-sizing:border-box"></div>
<div style="position:absolute;left:985px;top:415px;width:16px;height:23px;background:#e6e6e6;border:1px solid #a8a8a8;box-sizing:border-box"></div>
<svg style="position:absolute;left:988px;top:422px" width="10" height="7"><path d="M0.5 0.5 L5 5.5 L9.5 0.5" stroke="#555" fill="none"/></svg>
<div class="t" id="t607" style="transform:scaleX(0.9489);left:548px;top:418.70px;font-size:15px;color:#1a1a1a;font-weight:400;font-family:'Liberation Sans',sans-serif;">D:\Q730 USC\MT6765_Android_scatter.txt</div>
<div style="position:absolute;left:545px;top:451px;width:456px;height:23px;background:#fff;border:1px solid #a8a8a8;box-sizing:border-box"></div>
<div style="position:absolute;left:985px;top:451px;width:16px;height:23px;background:#e6e6e6;border:1px solid #a8a8a8;box-sizing:border-box"></div>
<svg style="position:absolute;left:988px;top:458px" width="10" height="7"><path d="M0.5 0.5 L5 5.5 L9.5 0.5" stroke="#555" fill="none"/></svg>
<div style="position:absolute;left:1009px;top:376px;width:94px;height:28px;background:#e1e1e1;border:1px solid #cfcfcf;box-sizing:border-box"></div>
<svg style="position:absolute;left:1012px;top:383px" width="17" height="14"><path d="M0.5 1.5 H6 L8 3.5 H15.5 V13.5 H0.5 Z" fill="#e8b820" stroke="#c89818"/><rect x="1" y="5" width="15" height="8.5" fill="#f8d040"/><path d="M1 5 H16" stroke="#fff" stroke-width="0.8"/></svg>
<div class="t" id="t608" style="transform:scaleX(0.9096);left:1032px;top:381.20px;font-size:15px;color:#1a1a1a;font-weight:400;font-family:'Liberation Sans',sans-serif;">choose</div>
<div style="position:absolute;left:1009px;top:413px;width:94px;height:28px;background:#e1e1e1;border:1px solid #cfcfcf;box-sizing:border-box"></div>
<svg style="position:absolute;left:1012px;top:420px" width="17" height="14"><path d="M0.5 1.5 H6 L8 3.5 H15.5 V13.5 H0.5 Z" fill="#e8b820" stroke="#c89818"/><rect x="1" y="5" width="15" height="8.5" fill="#f8d040"/><path d="M1 5 H16" stroke="#fff" stroke-width="0.8"/></svg>
<div class="t" id="t609" style="transform:scaleX(0.9096);left:1032px;top:418.20px;font-size:15px;color:#1a1a1a;font-weight:400;font-family:'Liberation Sans',sans-serif;">choose</div>
<div style="position:absolute;left:1009px;top:450px;width:94px;height:28px;background:#e1e1e1;border:1px solid #cfcfcf;box-sizing:border-box"></div>
<svg style="position:absolute;left:1012px;top:457px" width="17" height="14"><path d="M0.5 1.5 H6 L8 3.5 H15.5 V13.5 H0.5 Z" fill="#e8b820" stroke="#c89818"/><rect x="1" y="5" width="15" height="8.5" fill="#f8d040"/><path d="M1 5 H16" stroke="#fff" stroke-width="0.8"/></svg>
<div class="t" id="t610" style="transform:scaleX(0.9096);left:1032px;top:455.20px;font-size:15px;color:#1a1a1a;font-weight:400;font-family:'Liberation Sans',sans-serif;">choose</div>
<div style="position:absolute;left:414px;top:486px;width:165px;height:22px;background:#fff;border:1px solid #7a7a7a;border-radius:2px;box-sizing:border-box"></div>
<div style="position:absolute;left:563px;top:487px;width:15px;height:20px;background:#e8e8e8;border-left:1px solid #bbb;box-sizing:border-box"></div>
<svg style="position:absolute;left:567px;top:494px" width="7" height="5"><path d="M0 0 H7 L3.5 4 Z" fill="#111"/></svg>
<div class="t" id="t611" style="transform:scaleX(0.9339);left:415.6px;top:488.70px;font-size:15px;color:#1a1a1a;font-weight:400;font-family:'Liberation Sans',sans-serif;">Download Only</div>
<div style="position:absolute;left:414px;top:515px;width:668px;height:187px;background:#fff;border:1px solid #a0a0a0;box-sizing:border-box"></div>
<div style="position:absolute;left:417px;top:547px;width:17px;height:15px;border:1px solid #555;background:#fff;box-sizing:border-box;border-top-width:0px"></div>
<svg style="position:absolute;left:419px;top:548px" width="13" height="10"><path d="M1 5 L4.5 8.5 L12 1" stroke="#333" stroke-width="1.4" fill="none"/></svg>
<div class="t" id="t612" style="transform:scaleX(0.9243);left:462.3px;top:546.00px;font-size:15px;color:#1a1a1a;font-weight:400;font-family:'Liberation Sans',sans-serif;">scp_a</div>
<div class="t" id="t613" style="transform:scaleX(1.0112);left:534.75px;top:546.00px;font-size:15px;color:#1a1a1a;font-weight:400;font-family:'Liberation Sans',sans-serif;">0x000000001d100000</div>
<div class="t" id="t614" style="transform:scaleX(1.0376);left:693.25px;top:546.00px;font-size:15px;color:#1a1a1a;font-weight:400;font-family:'Liberation Sans',sans-serif;">0x000000001d1995ff</div>
<div class="t" id="t615" style="transform:scaleX(0.9545);left:846.8px;top:546.00px;font-size:15px;color:#1a1a1a;font-weight:400;font-family:'Liberation Sans',sans-serif;">EMMC_USER</div>
<div class="t" id="t616" style="transform:scaleX(1.0105);left:946px;top:546.00px;font-size:15px;color:#1a1a1a;font-weight:400;font-family:'Liberation Sans',sans-serif;">D:\Q730 USC...</div>
<div style="position:absolute;left:415px;top:563px;width:643px;height:20px;background:#52a47a"></div>
<div style="position:absolute;left:417px;top:565px;width:17px;height:17px;border:1px solid #555;background:#fff;box-sizing:border-box;border-top-width:1px"></div>
<svg style="position:absolute;left:419px;top:568px" width="13" height="10"><path d="M1 5 L4.5 8.5 L12 1" stroke="#333" stroke-width="1.4" fill="none"/></svg>
<div class="t" id="t617" style="transform:scaleX(0.9766);left:462.3px;top:565.60px;font-size:15px;color:#1a1a1a;font-weight:400;font-family:'Liberation Sans',sans-serif;">sspm_a</div>
<div class="t" id="t618" style="transform:scaleX(1.0112);left:534.75px;top:565.60px;font-size:15px;color:#1a1a1a;font-weight:400;font-family:'Liberation Sans',sans-serif;">0x000000001d200000</div>
<div class="t" id="t619" style="transform:scaleX(1.0376);left:693.25px;top:565.60px;font-size:15px;color:#1a1a1a;font-weight:400;font-family:'Liberation Sans',sans-serif;">0x000000001d269dff</div>
<div class="t" id="t620" style="transform:scaleX(0.9545);left:846.8px;top:565.60px;font-size:15px;color:#1a1a1a;font-weight:400;font-family:'Liberation Sans',sans-serif;">EMMC_USER</div>
<div class="t" id="t621" style="transform:scaleX(1.0105);left:946px;top:565.60px;font-size:15px;color:#1a1a1a;font-weight:400;font-family:'Liberation Sans',sans-serif;">D:\Q730 USC...</div>
<div style="position:absolute;left:417px;top:585px;width:17px;height:17px;border:1px solid #555;background:#fff;box-sizing:border-box;border-top-width:1px"></div>
<svg style="position:absolute;left:419px;top:588px" width="13" height="10"><path d="M1 5 L4.5 8.5 L12 1" stroke="#333" stroke-width="1.4" fill="none"/></svg>
<div class="t" id="t622" style="transform:scaleX(0.9081);left:462.3px;top:585.20px;font-size:15px;color:#1a1a1a;font-weight:400;font-family:'Liberation Sans',sans-serif;">lk_a</div>
<div class="t" id="t623" style="transform:scaleX(1.0112);left:534.75px;top:585.20px;font-size:15px;color:#1a1a1a;font-weight:400;font-family:'Liberation Sans',sans-serif;">0x000000001d300000</div>
<div class="t" id="t624" style="transform:scaleX(1.0376);left:693.25px;top:585.20px;font-size:15px;color:#1a1a1a;font-weight:400;font-family:'Liberation Sans',sans-serif;">0x000000001d4189ff</div>
<div class="t" id="t625" style="transform:scaleX(0.9545);left:846.8px;top:585.20px;font-size:15px;color:#1a1a1a;font-weight:400;font-family:'Liberation Sans',sans-serif;">EMMC_USER</div>
<div class="t" id="t626" style="transform:scaleX(1.0105);left:946px;top:585.20px;font-size:15px;color:#1a1a1a;font-weight:400;font-family:'Liberation Sans',sans-serif;">D:\Q730 USC...</div>
<div style="position:absolute;left:415px;top:602px;width:643px;height:20px;background:#52a47a"></div>
<div style="position:absolute;left:417px;top:604px;width:17px;height:17px;border:1px solid #555;background:#fff;box-sizing:border-box;border-top-width:1px"></div>
<svg style="position:absolute;left:419px;top:607px" width="13" height="10"><path d="M1 5 L4.5 8.5 L12 1" stroke="#333" stroke-width="1.4" fill="none"/></svg>
<div class="t" id="t627" style="transform:scaleX(0.9322);left:462.3px;top:604.80px;font-size:15px;color:#1a1a1a;font-weight:400;font-family:'Liberation Sans',sans-serif;">tee_a</div>
<div class="t" id="t628" style="transform:scaleX(1.0112);left:534.75px;top:604.80px;font-size:15px;color:#1a1a1a;font-weight:400;font-family:'Liberation Sans',sans-serif;">0x000000001d500000</div>
<div class="t" id="t629" style="transform:scaleX(1.0714);left:693.25px;top:604.80px;font-size:15px;color:#1a1a1a;font-weight:400;font-family:'Liberation Sans',sans-serif;">0x000000001d57dfff</div>
<div class="t" id="t630" style="transform:scaleX(0.9545);left:846.8px;top:604.80px;font-size:15px;color:#1a1a1a;font-weight:400;font-family:'Liberation Sans',sans-serif;">EMMC_USER</div>
<div class="t" id="t631" style="transform:scaleX(1.0105);left:946px;top:604.80px;font-size:15px;color:#1a1a1a;font-weight:400;font-family:'Liberation Sans',sans-serif;">D:\Q730 USC...</div>
<div style="position:absolute;left:417px;top:624px;width:17px;height:17px;border:1px solid #555;background:#fff;box-sizing:border-box;border-top-width:1px"></div>
<svg style="position:absolute;left:419px;top:627px" width="13" height="10"><path d="M1 5 L4.5 8.5 L12 1" stroke="#333" stroke-width="1.4" fill="none"/></svg>
<div class="t" id="t632" style="transform:scaleX(1.0212);left:462.3px;top:624.40px;font-size:15px;color:#1a1a1a;font-weight:400;font-family:'Liberation Sans',sans-serif;">logo_a</div>
<div class="t" id="t633" style="transform:scaleX(1.0112);left:534.75px;top:624.40px;font-size:15px;color:#1a1a1a;font-weight:400;font-family:'Liberation Sans',sans-serif;">0x000000001e000000</div>
<div class="t" id="t634" style="transform:scaleX(1.0781);left:693.25px;top:624.40px;font-size:15px;color:#1a1a1a;font-weight:400;font-family:'Liberation Sans',sans-serif;">0x000000001e16cfff</div>
<div class="t" id="t635" style="transform:scaleX(0.9545);left:846.8px;top:624.40px;font-size:15px;color:#1a1a1a;font-weight:400;font-family:'Liberation Sans',sans-serif;">EMMC_USER</div>
<div class="t" id="t636" style="transform:scaleX(1.0105);left:946px;top:624.40px;font-size:15px;color:#1a1a1a;font-weight:400;font-family:'Liberation Sans',sans-serif;">D:\Q730 USC...</div>
<div style="position:absolute;left:415px;top:642px;width:643px;height:20px;background:#52a47a"></div>
<div style="position:absolute;left:417px;top:644px;width:17px;height:17px;border:1px solid #555;background:#fff;box-sizing:border-box;border-top-width:1px"></div>
<svg style="position:absolute;left:419px;top:647px" width="13" height="10"><path d="M1 5 L4.5 8.5 L12 1" stroke="#333" stroke-width="1.4" fill="none"/></svg>
<div class="t" id="t637" style="transform:scaleX(1.0460);left:462.3px;top:644.00px;font-size:15px;color:#1a1a1a;font-weight:400;font-family:'Liberation Sans',sans-serif;">dtbo_a</div>
<div class="t" id="t638" style="transform:scaleX(1.0112);left:534.75px;top:644.00px;font-size:15px;color:#1a1a1a;font-weight:400;font-family:'Liberation Sans',sans-serif;">0x000000001e800000</div>
<div class="t" id="t639" style="transform:scaleX(1.0376);left:693.25px;top:644.00px;font-size:15px;color:#1a1a1a;font-weight:400;font-family:'Liberation Sans',sans-serif;">0x000000001e869bff</div>
<div class="t" id="t640" style="transform:scaleX(0.9545);left:846.8px;top:644.00px;font-size:15px;color:#1a1a1a;font-weight:400;font-family:'Liberation Sans',sans-serif;">EMMC_USER</div>
<div class="t" id="t641" style="transform:scaleX(1.0105);left:946px;top:644.00px;font-size:15px;color:#1a1a1a;font-weight:400;font-family:'Liberation Sans',sans-serif;">D:\Q730 USC...</div>
<div style="position:absolute;left:417px;top:664px;width:17px;height:17px;border:1px solid #555;background:#fff;box-sizing:border-box;border-top-width:1px"></div>
<svg style="position:absolute;left:419px;top:667px" width="13" height="10"><path d="M1 5 L4.5 8.5 L12 1" stroke="#333" stroke-width="1.4" fill="none"/></svg>
<div class="t" id="t642" style="transform:scaleX(0.9913);left:462.3px;top:663.60px;font-size:15px;color:#1a1a1a;font-weight:400;font-family:'Liberation Sans',sans-serif;">vbmeta_a</div>
<div class="t" id="t643" style="transform:scaleX(1.0403);left:534.75px;top:663.60px;font-size:15px;color:#1a1a1a;font-weight:400;font-family:'Liberation Sans',sans-serif;">0x000000001f000000</div>
<div class="t" id="t644" style="transform:scaleX(1.1054);left:693.25px;top:663.60px;font-size:15px;color:#1a1a1a;font-weight:400;font-family:'Liberation Sans',sans-serif;">0x000000001f000fff</div>
<div class="t" id="t645" style="transform:scaleX(0.9545);left:846.8px;top:663.60px;font-size:15px;color:#1a1a1a;font-weight:400;font-family:'Liberation Sans',sans-serif;">EMMC_USER</div>
<div class="t" id="t646" style="transform:scaleX(1.0105);left:946px;top:663.60px;font-size:15px;color:#1a1a1a;font-weight:400;font-family:'Liberation Sans',sans-serif;">D:\Q730 USC...</div>
<div style="position:absolute;left:415px;top:681px;width:643px;height:20px;background:#52a47a"></div>
<div style="position:absolute;left:417px;top:683px;width:17px;height:17px;border:1px solid #555;background:#fff;box-sizing:border-box;border-top-width:1px"></div>
<svg style="position:absolute;left:419px;top:686px" width="13" height="10"><path d="M1 5 L4.5 8.5 L12 1" stroke="#333" stroke-width="1.4" fill="none"/></svg>
<div class="t" id="t647" style="transform:scaleX(1.0460);left:462.3px;top:683.20px;font-size:15px;color:#1a1a1a;font-weight:400;font-family:'Liberation Sans',sans-serif;">boot_a</div>
<div class="t" id="t648" style="transform:scaleX(1.0112);left:534.75px;top:683.20px;font-size:15px;color:#1a1a1a;font-weight:400;font-family:'Liberation Sans',sans-serif;">0x0000000020800000</div>
<div class="t" id="t649" style="transform:scaleX(1.0376);left:693.25px;top:683.20px;font-size:15px;color:#1a1a1a;font-weight:400;font-family:'Liberation Sans',sans-serif;">0x000000002440a7ff</div>
<div class="t" id="t650" style="transform:scaleX(0.9545);left:846.8px;top:683.20px;font-size:15px;color:#1a1a1a;font-weight:400;font-family:'Liberation Sans',sans-serif;">EMMC_USER</div>
<div class="t" id="t651" style="transform:scaleX(1.0105);left:946px;top:683.20px;font-size:15px;color:#1a1a1a;font-weight:400;font-family:'Liberation Sans',sans-serif;">D:\Q730 USC...</div>
<div style="position:absolute;left:459px;top:547px;width:1px;height:154px;background:#d8d8d8"></div>
<div style="position:absolute;left:530px;top:547px;width:1px;height:154px;background:#d8d8d8"></div>
<div style="position:absolute;left:690px;top:547px;width:1px;height:154px;background:#d8d8d8"></div>
<div style="position:absolute;left:843px;top:547px;width:1px;height:154px;background:#d8d8d8"></div>
<div style="position:absolute;left:943px;top:547px;width:1px;height:154px;background:#d8d8d8"></div>
<div style="position:absolute;left:415px;top:516px;width:643px;height:32px;background:#cbcbf0"></div>
<div style="position:absolute;left:459px;top:516px;width:1px;height:32px;background:#a8a8d0"></div>
<div style="position:absolute;left:530px;top:516px;width:1px;height:32px;background:#a8a8d0"></div>
<div style="position:absolute;left:690px;top:516px;width:1px;height:32px;background:#a8a8d0"></div>
<div style="position:absolute;left:843px;top:516px;width:1px;height:32px;background:#a8a8d0"></div>
<div style="position:absolute;left:943px;top:516px;width:1px;height:32px;background:#a8a8d0"></div>
<div style="position:absolute;left:415px;top:547px;width:643px;height:1px;background:#a0a0b8"></div>
<div style="position:absolute;left:428px;top:523px;width:18px;height:17px;border:1px solid #333;background:#fff;box-sizing:border-box"></div>
<svg style="position:absolute;left:430px;top:526px" width="14" height="11"><path d="M1.5 5.5 L5 9 L12.5 1.5" stroke="#333" stroke-width="1.4" fill="none"/></svg>
<div class="t" id="t652" style="transform:scaleX(0.9575);left:475px;top:524.24px;font-size:15.5px;color:#1a1a1a;font-weight:400;font-family:'Liberation Sans',sans-serif;">Name</div>
<div class="t" id="t653" style="transform:scaleX(0.9763);left:561.4px;top:524.24px;font-size:15.5px;color:#1a1a1a;font-weight:400;font-family:'Liberation Sans',sans-serif;">Begin Address</div>
<div class="t" id="t654" style="transform:scaleX(0.9897);left:723.5px;top:524.24px;font-size:15.5px;color:#1a1a1a;font-weight:400;font-family:'Liberation Sans',sans-serif;">End Address</div>
<div class="t" id="t655" style="transform:scaleX(0.9588);left:869.8px;top:524.24px;font-size:15.5px;color:#1a1a1a;font-weight:400;font-family:'Liberation Sans',sans-serif;">Region</div>
<div class="t" id="t656" style="transform:scaleX(0.9742);left:972.3px;top:524.24px;font-size:15.5px;color:#1a1a1a;font-weight:400;font-family:'Liberation Sans',sans-serif;">Location</div>
<div style="position:absolute;left:1058px;top:516px;width:23px;height:185px;background:#f0f0f0"></div>
<svg style="position:absolute;left:1063px;top:524px" width="13" height="9"><path d="M1.5 7.5 L6.5 2 L11.5 7.5" stroke="#555" stroke-width="1.6" fill="none"/></svg>
<svg style="position:absolute;left:1063px;top:685px" width="13" height="9"><path d="M1.5 1.5 L6.5 7 L11.5 1.5" stroke="#555" stroke-width="1.6" fill="none"/></svg>
<div style="position:absolute;left:1060px;top:598px;width:19px;height:81px;background:#cdcdcd"></div>
<svg style="position:absolute;left:1012px;top:620px" width="16" height="24"><path d="M1 1 V19 L5.5 14.5 L9 22 L11.5 21 L8 13.5 H14 Z" fill="#fff" stroke="#222" stroke-width="1"/></svg>
<div style="position:absolute;left:391px;top:732px;width:738px;height:17px;background:#fff;border:1px solid #bcbcbc;border-bottom:none;box-sizing:border-box"></div>
<div style="position:absolute;left:391px;top:748px;width:738px;height:20px;background:#f0f0f0"></div>
<div style="position:absolute;left:391px;top:748px;width:1px;height:20px;background:#d0d0d0"></div>
<div style="position:absolute;left:477px;top:748px;width:1px;height:20px;background:#d0d0d0"></div>
<div style="position:absolute;left:562px;top:748px;width:1px;height:20px;background:#d0d0d0"></div>
<div style="position:absolute;left:614px;top:748px;width:1px;height:20px;background:#d0d0d0"></div>
<div style="position:absolute;left:658px;top:748px;width:1px;height:20px;background:#d0d0d0"></div>
<div style="position:absolute;left:742px;top:748px;width:1px;height:20px;background:#d0d0d0"></div>
<div style="position:absolute;left:820px;top:748px;width:1px;height:20px;background:#d0d0d0"></div>
<div style="position:absolute;left:1128px;top:748px;width:1px;height:20px;background:#d0d0d0"></div>
<div class="t" id="t657" style="transform:scaleX(0.9945);left:438.5px;top:750.20px;font-size:15px;color:#1a1a1a;font-weight:400;font-family:'Liberation Sans',sans-serif;">0 B/s</div>
<div class="t" id="t658" style="transform:scaleX(0.9394);left:511px;top:750.20px;font-size:15px;color:#1a1a1a;font-weight:400;font-family:'Liberation Sans',sans-serif;">0 Bytes</div>
<div class="t" id="t659" style="transform:scaleX(0.9165);left:614px;top:750.20px;font-size:15px;color:#111;font-weight:700;font-family:'Liberation Sans',sans-serif;">EMMC</div>
<div class="t" id="t660" style="transform:scaleX(0.9119);left:663px;top:750.20px;font-size:15px;color:#1a1a1a;font-weight:400;font-family:'Liberation Sans',sans-serif;">High Speed</div>
<div class="t" id="t661" style="transform:scaleX(0.9759);left:766px;top:750.20px;font-size:15px;color:#1a1a1a;font-weight:400;font-family:'Liberation Sans',sans-serif;">0:00</div>
<div class="t" id="t662" style="transform:scaleX(0.9636);left:823.5px;top:750.20px;font-size:15px;color:#1a1a1a;font-weight:400;font-family:'Liberation Sans',sans-serif;">USB: DA Download All(high speed,auto detect)</div>
<div class="t" id="t663" style="transform:scaleX(0.9986);left:1297px;top:745.86px;font-size:42px;color:#e6e6e6;font-weight:400;font-family:'Liberation Sans',sans-serif;text-shadow:1px 3px 4px rgba(0,0,0,0.42)">www.hovatek.com</div>
</body></html>
